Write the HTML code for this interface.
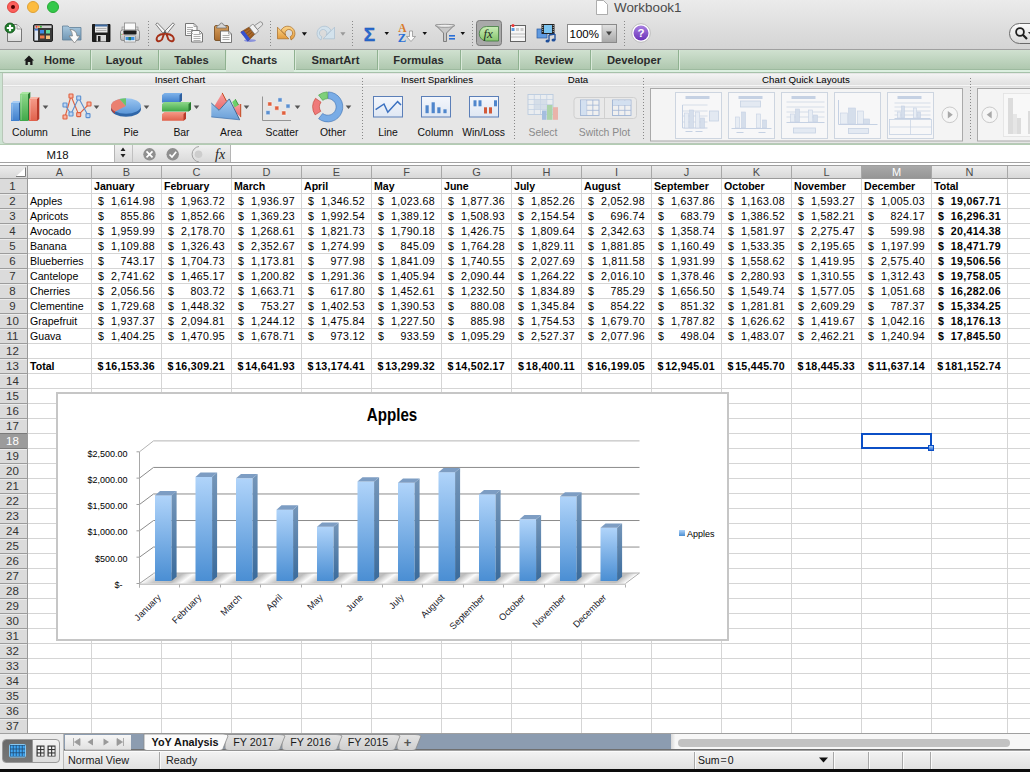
<!DOCTYPE html><html><head><meta charset="utf-8"><style>
*{margin:0;padding:0;box-sizing:border-box}
html,body{width:1030px;height:772px;overflow:hidden;background:#fff;font-family:"Liberation Sans",sans-serif}
.a{position:absolute}
.t{position:absolute;white-space:nowrap;line-height:1}
</style></head><body>
<div class="a" style="left:0;top:0;width:1030px;height:50px;background:linear-gradient(#ebebeb,#d4d4d4);border-bottom:1px solid #a0a0a0"></div>
<div class="a" style="left:7px;top:1px;width:12px;height:12px;border-radius:50%;background:#fc605c;border:0.5px solid #e0443e"></div>
<div class="a" style="left:27px;top:1px;width:12px;height:12px;border-radius:50%;background:#fdbc40;border:0.5px solid #dea236"></div>
<div class="a" style="left:47px;top:1px;width:12px;height:12px;border-radius:50%;background:#34c84a;border:0.5px solid #27aa35"></div>
<div class="a" style="left:11px;top:5px;width:4px;height:4px;border-radius:50%;background:#4d0000"></div>
<div class="t" style="left:614px;top:1px;font-size:13.4px;color:#4a4a4a">Workbook1</div>
<svg class="a" style="left:0;top:0" width="1030" height="49"><defs><linearGradient id="pg" x1="0" y1="0" x2="0" y2="1"><stop offset="0" stop-color="#ffffff"/><stop offset="1" stop-color="#dcdcdc"/></linearGradient><linearGradient id="fold" x1="0" y1="0" x2="0" y2="1"><stop offset="0" stop-color="#a9c8de"/><stop offset="1" stop-color="#6f96b4"/></linearGradient><linearGradient id="undo" x1="0" y1="0" x2="0" y2="1"><stop offset="0" stop-color="#fbd58a"/><stop offset="1" stop-color="#e39a3b"/></linearGradient><linearGradient id="fxg" x1="0" y1="0" x2="0" y2="1"><stop offset="0" stop-color="#c9ecb6"/><stop offset="1" stop-color="#86c46c"/></linearGradient><linearGradient id="help" x1="0" y1="0" x2="0" y2="1"><stop offset="0" stop-color="#a77ee0"/><stop offset="1" stop-color="#6a32b8"/></linearGradient><linearGradient id="clip" x1="0" y1="0" x2="0" y2="1"><stop offset="0" stop-color="#d9a05c"/><stop offset="1" stop-color="#a86a2c"/></linearGradient></defs><line x1="148.5" y1="21" x2="148.5" y2="46" stroke="#8a8a8a" stroke-width="1" stroke-dasharray="1,2"/><line x1="270.5" y1="21" x2="270.5" y2="46" stroke="#8a8a8a" stroke-width="1" stroke-dasharray="1,2"/><line x1="352.5" y1="21" x2="352.5" y2="46" stroke="#8a8a8a" stroke-width="1" stroke-dasharray="1,2"/><line x1="472.5" y1="21" x2="472.5" y2="46" stroke="#8a8a8a" stroke-width="1" stroke-dasharray="1,2"/><line x1="624.5" y1="21" x2="624.5" y2="46" stroke="#8a8a8a" stroke-width="1" stroke-dasharray="1,2"/><path d="M7.5,24.5 H17 L21.5,29 V41.5 H7.5 Z" fill="url(#pg)" stroke="#777" stroke-width="1"/><path d="M17,24.5 V29 H21.5" fill="#eee" stroke="#888" stroke-width="0.8"/><circle cx="10" cy="28" r="5" fill="#1e7a2a" stroke="#0d4d15" stroke-width="0.8"/><path d="M10,24.8 V31.2 M6.8,28 H13.2" stroke="#fff" stroke-width="2.2"/><rect x="33.5" y="24.5" width="19" height="17" rx="1.5" fill="#3a3a3a" stroke="#222" stroke-width="1"/><rect x="34.5" y="25.5" width="17" height="2.5" fill="#cfcfcf"/><circle cx="36.5" cy="26.8" r="1" fill="#e33"/><circle cx="38.7" cy="26.8" r="1" fill="#f93"/><circle cx="40.9" cy="26.8" r="1" fill="#3b3"/><rect x="34.5" y="28.5" width="3.5" height="12" fill="#dfe6f0"/><rect x="34.5" y="29" width="3.5" height="1.5" fill="#3a6fd0"/><rect x="40" y="30" width="4" height="3.5" fill="#3f8ae8"/><rect x="46" y="30" width="4" height="3.5" fill="#5fd9a0"/><rect x="40" y="35.5" width="4.5" height="3" fill="#f07a4a"/><rect x="46" y="35.5" width="4" height="3.5" fill="#f5c080"/><path d="M62.5,26 H68 L69.5,27.5 H81 V40 H62.5 Z" fill="url(#fold)" stroke="#5f7f98" stroke-width="0.8"/><path d="M70,29.5 Q76.5,29.5 77,36 H80 L74.5,43 L69,36 H72.5 Q72.5,32 70,29.5 Z" fill="#fafafa" stroke="#7a7a7a" stroke-width="0.7"/><path d="M92.5,24.5 H110 V41.5 H92.5 Z" fill="#1e1e1e" stroke="#000" stroke-width="0.8"/><rect x="95" y="24.5" width="12.5" height="8" fill="#e8e8e8"/><rect x="95" y="24.5" width="12.5" height="2" fill="#3e6aa0"/><line x1="96" y1="28.5" x2="106.5" y2="28.5" stroke="#999" stroke-width="0.7"/><line x1="96" y1="30.5" x2="106.5" y2="30.5" stroke="#999" stroke-width="0.7"/><rect x="96.5" y="35" width="9.5" height="6.5" fill="#d8d8d8"/><rect x="98" y="36" width="2.5" height="5.5" fill="#1e1e1e"/><linearGradient id="prb" x1="0" y1="0" x2="0" y2="1"><stop offset="0" stop-color="#f2f2f2"/><stop offset="1" stop-color="#b4b4b4"/></linearGradient><rect x="122" y="27" width="16" height="5" fill="#d8d8d8" stroke="#888" stroke-width="0.6"/><rect x="124.5" y="23" width="11" height="7.5" fill="#fbfbfb" stroke="#8a8a8a" stroke-width="0.8"/><rect x="120.5" y="30" width="19" height="10.5" rx="2" fill="url(#prb)" stroke="#7a7a7a" stroke-width="0.8"/><rect x="123.5" y="30.5" width="13" height="4" rx="0.8" fill="#1e1e1e"/><rect x="124.5" y="36" width="11" height="6" fill="#fbfbfb" stroke="#888" stroke-width="0.7"/><rect x="125.5" y="37" width="9" height="3.2" fill="#3c8fe0"/><rect x="128.5" y="37" width="2.5" height="3.2" fill="#2a7a52"/><circle cx="121.8" cy="34.3" r="0.6" fill="#5c5"/><circle cx="123" cy="34.3" r="0.6" fill="#e55"/><path d="M155.8,24.3 L157.3,22.8 L167,32.8 L164.2,34.8 Z" fill="#f6f6f6" stroke="#4a4a4a" stroke-width="0.7"/><path d="M174.5,24.3 L173,22.8 L163.3,32.8 L166.1,34.8 Z" fill="#f6f6f6" stroke="#4a4a4a" stroke-width="0.7"/><circle cx="165.2" cy="32.5" r="1.3" fill="#555"/><path d="M164,34 Q160,34 158,36 Q155.5,39 157.5,41 Q160,42 162,39.5 Z" fill="none" stroke="#a53018" stroke-width="1.9"/><path d="M166.4,34 Q170.4,34 172.4,36 Q174.9,39 172.9,41 Q170.4,42 168.4,39.5 Z" fill="none" stroke="#a53018" stroke-width="1.9"/><path d="M185.5,23.5 H194 L197,26.5 V35.5 H185.5 Z" fill="#fafafa" stroke="#6a6a6a" stroke-width="0.9"/><path d="M194,23.5 V26.5 H197" fill="none" stroke="#888" stroke-width="0.7"/><path d="M191.5,30.5 H199.5 L202.5,33.5 V42 H191.5 Z" fill="#fafafa" stroke="#6a6a6a" stroke-width="0.9"/><path d="M199.5,30.5 V33.5 H202.5" fill="none" stroke="#888" stroke-width="0.7"/><line x1="187" y1="27.5" x2="193" y2="27.5" stroke="#9a9a9a" stroke-width="0.8"/><line x1="187" y1="29.5" x2="193" y2="29.5" stroke="#9a9a9a" stroke-width="0.8"/><line x1="187" y1="31.5" x2="193" y2="31.5" stroke="#9a9a9a" stroke-width="0.8"/><line x1="187" y1="33.5" x2="193" y2="33.5" stroke="#9a9a9a" stroke-width="0.8"/><line x1="193.5" y1="34.5" x2="200.5" y2="34.5" stroke="#9a9a9a" stroke-width="0.8"/><line x1="193.5" y1="36.5" x2="200.5" y2="36.5" stroke="#9a9a9a" stroke-width="0.8"/><line x1="193.5" y1="38.5" x2="200.5" y2="38.5" stroke="#9a9a9a" stroke-width="0.8"/><line x1="193.5" y1="40.5" x2="200.5" y2="40.5" stroke="#9a9a9a" stroke-width="0.8"/><rect x="214.5" y="25.5" width="14" height="15" rx="1.5" fill="url(#clip)" stroke="#6e4418" stroke-width="0.8"/><path d="M216.5,28 Q216.5,25 219.5,25 Q220,23 221.5,23 Q223,23 223.5,25 Q226.5,25 226.5,28 Z" fill="#d6d6d6" stroke="#666" stroke-width="0.7"/><path d="M220.5,31 H228.5 L231.5,34 V42.5 H220.5 Z" fill="#fafafa" stroke="#6a6a6a" stroke-width="0.9"/><path d="M228.5,31 V34 H231.5" fill="none" stroke="#888" stroke-width="0.7"/><line x1="222.5" y1="35.5" x2="229.5" y2="35.5" stroke="#9a9a9a" stroke-width="0.8"/><line x1="222.5" y1="37.5" x2="229.5" y2="37.5" stroke="#9a9a9a" stroke-width="0.8"/><line x1="222.5" y1="39.5" x2="229.5" y2="39.5" stroke="#9a9a9a" stroke-width="0.8"/><ellipse cx="250" cy="40.6" rx="6" ry="1.4" fill="#4a5ae0" opacity="0.55"/><g transform="translate(244.5,36.5) rotate(-38)"><path d="M0,-5.8 L9.5,-4.6 L9.5,4.6 L0,5.8 Z" fill="#a8682a" stroke="#6a3a10" stroke-width="0.5"/><path d="M2,-4.5 L9,-3.5 M2,-1.5 L9,-1.2 M2,1.5 L9,1.2 M2,4.5 L9,3.5" stroke="#7a4210" stroke-width="0.6"/><path d="M-0.6,-5.8 L3,-5.4 L3,5.4 L-0.6,5.8 Z" fill="#3552d0"/><rect x="9.5" y="-4.6" width="5" height="9.2" rx="1" fill="#f2f2f2" stroke="#7a7a7a" stroke-width="0.7"/><path d="M14.5,-2.4 L21.5,-2 Q23.5,0 21.5,2 L14.5,2.4 Z" fill="#e6e6e6" stroke="#7a7a7a" stroke-width="0.7"/></g><path d="M281,30.5 A7.3,7.3 0 1 1 291,40 L290.3,36.6 A3.7,3.7 0 1 0 285.8,35.2 Z" fill="url(#undo)" stroke="#a86a22" stroke-width="0.7"/><path d="M277.5,27.2 V38.8 H288.8 Z" fill="url(#undo)" stroke="#a86a22" stroke-width="0.7"/><path d="M301.8,32.2 H307 L304.4,35.8 Z" fill="#111"/><g transform="translate(612,0) scale(-1,1)"><path d="M281,30.5 A7.3,7.3 0 1 1 291,40 L290.3,36.6 A3.7,3.7 0 1 0 285.8,35.2 Z" fill="#d3e2ec" stroke="#a9bfd0" stroke-width="0.7"/><path d="M277.5,27.2 V38.8 H288.8 Z" fill="#d3e2ec" stroke="#a9bfd0" stroke-width="0.7"/></g><path d="M340.3,32.2 H345.5 L342.9,35.8 Z" fill="#999"/><text x="369.5" y="40.5" text-anchor="middle" font-family="Liberation Sans" font-weight="bold" font-size="19" fill="#2a6ad0" stroke="#1d4fa8" stroke-width="0.3">&#931;</text><path d="M384.5,32 H389 L386.75,35 Z" fill="#111"/><text x="402.5" y="31.5" text-anchor="middle" font-family="Liberation Serif" font-weight="bold" font-size="11.5" fill="#d87a2a">A</text><text x="402" y="42" text-anchor="middle" font-family="Liberation Serif" font-weight="bold" font-size="12.5" fill="#2a6fd6">Z</text><path d="M409.5,31 V36.5 H406.5 L411,41.5 L415.5,36.5 H412.5 V31 Z" fill="#fafafa" stroke="#888" stroke-width="0.7"/><path d="M422.5,32 H427 L424.75,35 Z" fill="#111"/><path d="M435.5,25 H454.5 L446.5,33 V41.5 H443.5 V33 Z" fill="#c8c8c8" stroke="#6a6a6a" stroke-width="0.8"/><ellipse cx="445" cy="25.8" rx="9.5" ry="1.5" fill="#eee" stroke="#777" stroke-width="0.6"/><rect x="449" y="35" width="6" height="1.6" fill="#2a6fd6"/><rect x="449" y="38" width="6" height="1.6" fill="#2a6fd6"/><path d="M460.5,32 H465 L462.75,35 Z" fill="#111"/><rect x="476.5" y="20.5" width="25" height="25" rx="3" fill="#a9a9a9" stroke="#7a7a7a" stroke-width="1"/><path d="M486.5,26.5 H498.5 V41 H486.5 A7.25,7.25 0 0 1 486.5,26.5 Z" fill="url(#fxg)" stroke="#3e7a3e" stroke-width="0.8"/><text x="483.5" y="38.3" font-family="Liberation Serif" font-style="italic" font-size="13" fill="#1f2f1f">fx</text><rect x="510.5" y="25.5" width="15" height="16" fill="#f6f6f6" stroke="#555" stroke-width="0.9"/><rect x="511.5" y="28" width="3" height="3" fill="#5a9ae0"/><rect x="516" y="28" width="3" height="3" fill="#ccc"/><rect x="520.5" y="28" width="3" height="3" fill="#ccc"/><circle cx="513" cy="25.5" r="1.5" fill="#e33"/><line x1="511" y1="34" x2="525" y2="34" stroke="#999" stroke-width="0.6"/><line x1="511" y1="37" x2="525" y2="37" stroke="#999" stroke-width="0.6"/><rect x="537" y="29" width="10" height="9" fill="#5f9ae0" stroke="#2a5aa0" stroke-width="0.7"/><rect x="541.5" y="24" width="13" height="10" fill="#222"/><rect x="544" y="25" width="8" height="8" fill="#7cc4f0"/><path d="M542.7,25 V33 M553.3,25 V33" stroke="#ddd" stroke-width="0.8" stroke-dasharray="1,1"/><path d="M549,35 V41 M555,34 V40" stroke="#1e4e9a" stroke-width="1.3"/><path d="M549,35 L555,34" stroke="#1e4e9a" stroke-width="1.6"/><ellipse cx="547.5" cy="41" rx="2" ry="1.5" fill="#1e4e9a"/><ellipse cx="553.5" cy="40" rx="2" ry="1.5" fill="#1e4e9a"/><rect x="567.5" y="24.5" width="49" height="18" fill="#fff" stroke="#8a8a8a" stroke-width="1"/><linearGradient id="zd" x1="0" y1="0" x2="0" y2="1"><stop offset="0" stop-color="#e0e0e0"/><stop offset="1" stop-color="#a9a9a9"/></linearGradient><rect x="602" y="25" width="14" height="17" fill="url(#zd)"/><line x1="602" y1="25" x2="602" y2="42" stroke="#aaa" stroke-width="0.8"/><path d="M606,31.5 H612 L609,35.5 Z" fill="#444"/><text x="569.5" y="38" font-family="Liberation Sans" font-size="11.5" fill="#000">100%</text><circle cx="641" cy="33" r="9.3" fill="#fff" stroke="#b0b0b0" stroke-width="0.8"/><circle cx="641" cy="33" r="7.5" fill="url(#help)"/><text x="641" y="37.3" text-anchor="middle" font-family="Liberation Sans" font-weight="bold" font-size="11.5" fill="#fff">?</text><path d="M596.5,0.5 H603.5 L607.5,4.5 V14.5 H596.5 Z" fill="#fff" stroke="#9a9a9a" stroke-width="0.8"/><linearGradient id="sf" x1="0" y1="0" x2="0" y2="1"><stop offset="0" stop-color="#fdfdfd"/><stop offset="1" stop-color="#d8d8d8"/></linearGradient><rect x="1009.5" y="23.5" width="40" height="20" rx="10" fill="url(#sf)" stroke="#6a6a6a" stroke-width="1"/><circle cx="1020" cy="32" r="3.9" fill="none" stroke="#1e1e1e" stroke-width="1.8"/><path d="M1022.8,34.8 L1027,39" stroke="#1e1e1e" stroke-width="2.2"/><path d="M1028,32 H1031 L1029.5,34 Z" fill="#333"/></svg>
<div class="a" style="left:0;top:50px;width:1030px;height:20px;background:linear-gradient(#d0e1d0,#afc8af);border-bottom:1px solid #9dba9f"></div>
<div class="a" style="left:0;top:70px;width:1030px;height:75px;background:#cde3d2"></div>
<div class="a" style="left:0;top:70px;width:1030px;height:2px;background:#dcefe0"></div>
<div class="a" style="left:0;top:72px;width:1030px;height:1px;background:#a6c2aa"></div>
<div class="a" style="left:2px;top:73px;width:1028px;height:71px;background:#e6e6e6;border:1px solid #b8c8b8;border-top:none;border-right:none;border-radius:0 0 0 4px"></div>
<div class="a" style="left:3px;top:74px;width:1027px;height:13px;background:linear-gradient(#f2f2f2,#dedede)"></div>
<div class="a" style="left:226px;top:50px;width:68px;height:22px;background:linear-gradient(#e4eee4,#d2e2d4)"></div><div class="a" style="left:90px;top:50px;width:1px;height:20px;background:#8fb190"></div><div class="a" style="left:91px;top:50px;width:1px;height:20px;background:#dbe9db"></div><div class="a" style="left:158px;top:50px;width:1px;height:20px;background:#8fb190"></div><div class="a" style="left:159px;top:50px;width:1px;height:20px;background:#dbe9db"></div><div class="a" style="left:225px;top:50px;width:1px;height:20px;background:#8fb190"></div><div class="a" style="left:226px;top:50px;width:1px;height:20px;background:#dbe9db"></div><div class="a" style="left:294px;top:50px;width:1px;height:20px;background:#8fb190"></div><div class="a" style="left:295px;top:50px;width:1px;height:20px;background:#dbe9db"></div><div class="a" style="left:377px;top:50px;width:1px;height:20px;background:#8fb190"></div><div class="a" style="left:378px;top:50px;width:1px;height:20px;background:#dbe9db"></div><div class="a" style="left:460px;top:50px;width:1px;height:20px;background:#8fb190"></div><div class="a" style="left:461px;top:50px;width:1px;height:20px;background:#dbe9db"></div><div class="a" style="left:518px;top:50px;width:1px;height:20px;background:#8fb190"></div><div class="a" style="left:519px;top:50px;width:1px;height:20px;background:#dbe9db"></div><div class="a" style="left:590px;top:50px;width:1px;height:20px;background:#8fb190"></div><div class="a" style="left:591px;top:50px;width:1px;height:20px;background:#dbe9db"></div><div class="a" style="left:678px;top:50px;width:1px;height:20px;background:#8fb190"></div><div class="a" style="left:679px;top:50px;width:1px;height:20px;background:#dbe9db"></div><div class="t" style="left:44px;top:55px;font-size:11.2px;font-weight:bold;color:#2b2b2b">Home</div><div class="t" style="left:90px;width:68px;text-align:center;top:55px;font-size:11.2px;font-weight:bold;color:#2b2b2b">Layout</div><div class="t" style="left:158px;width:67px;text-align:center;top:55px;font-size:11.2px;font-weight:bold;color:#2b2b2b">Tables</div><div class="t" style="left:225px;width:69px;text-align:center;top:55px;font-size:11.2px;font-weight:bold;color:#2b2b2b">Charts</div><div class="t" style="left:294px;width:83px;text-align:center;top:55px;font-size:11.2px;font-weight:bold;color:#2b2b2b">SmartArt</div><div class="t" style="left:377px;width:83px;text-align:center;top:55px;font-size:11.2px;font-weight:bold;color:#2b2b2b">Formulas</div><div class="t" style="left:460px;width:58px;text-align:center;top:55px;font-size:11.2px;font-weight:bold;color:#2b2b2b">Data</div><div class="t" style="left:518px;width:72px;text-align:center;top:55px;font-size:11.2px;font-weight:bold;color:#2b2b2b">Review</div><div class="t" style="left:590px;width:88px;text-align:center;top:55px;font-size:11.2px;font-weight:bold;color:#2b2b2b">Developer</div><svg class="a" style="left:22px;top:54px" width="14" height="12"><path d="M2,6.5 L7,1.5 L12,6.5 H10.5 V11 H8.2 V8 H5.8 V11 H3.5 V6.5 Z" fill="#1a1a1a"/></svg>
<svg class="a" style="left:0;top:0" width="1030" height="146"><defs><linearGradient id="rb" x1="0" y1="0" x2="0" y2="1"><stop offset="0" stop-color="#7fb3ea"/><stop offset="1" stop-color="#3f7fcc"/></linearGradient><linearGradient id="rg" x1="0" y1="0" x2="0" y2="1"><stop offset="0" stop-color="#8fd88a"/><stop offset="1" stop-color="#3fa848"/></linearGradient><linearGradient id="rr" x1="0" y1="0" x2="0" y2="1"><stop offset="0" stop-color="#f59a88"/><stop offset="1" stop-color="#e0604a"/></linearGradient><linearGradient id="pieb" x1="0" y1="0" x2="0" y2="1"><stop offset="0" stop-color="#9cc6f0"/><stop offset="1" stop-color="#5a96d8"/></linearGradient><linearGradient id="sp" x1="0" y1="0" x2="0" y2="1"><stop offset="0" stop-color="#f4f7fc"/><stop offset="1" stop-color="#dfe7f3"/></linearGradient></defs><rect x="3" y="74" width="1027" height="11" fill="url(#hb)"/><linearGradient id="hb" x1="0" y1="0" x2="0" y2="1"><stop offset="0" stop-color="#f3f3f3"/><stop offset="1" stop-color="#e0e0e0"/></linearGradient><line x1="3" y1="85.5" x2="1030" y2="85.5" stroke="#f6f6f6" stroke-width="1"/><text x="180" y="83" text-anchor="middle" font-family="Liberation Sans" font-size="9.7" fill="#000">Insert Chart</text><text x="437" y="83" text-anchor="middle" font-family="Liberation Sans" font-size="9.7" fill="#000">Insert Sparklines</text><text x="578" y="83" text-anchor="middle" font-family="Liberation Sans" font-size="9.7" fill="#000">Data</text><text x="806" y="83" text-anchor="middle" font-family="Liberation Sans" font-size="9.7" fill="#000">Chart Quick Layouts</text><line x1="362.5" y1="78" x2="362.5" y2="140" stroke="#888" stroke-width="1" stroke-dasharray="1,2"/><line x1="514.5" y1="78" x2="514.5" y2="140" stroke="#888" stroke-width="1" stroke-dasharray="1,2"/><line x1="643.5" y1="78" x2="643.5" y2="140" stroke="#888" stroke-width="1" stroke-dasharray="1,2"/><line x1="970.5" y1="78" x2="970.5" y2="140" stroke="#888" stroke-width="1" stroke-dasharray="1,2"/><text x="30" y="136" text-anchor="middle" font-family="Liberation Sans" font-size="10.4" fill="#111">Column</text><text x="81" y="136" text-anchor="middle" font-family="Liberation Sans" font-size="10.4" fill="#111">Line</text><text x="131" y="136" text-anchor="middle" font-family="Liberation Sans" font-size="10.4" fill="#111">Pie</text><text x="181.5" y="136" text-anchor="middle" font-family="Liberation Sans" font-size="10.4" fill="#111">Bar</text><text x="231" y="136" text-anchor="middle" font-family="Liberation Sans" font-size="10.4" fill="#111">Area</text><text x="282" y="136" text-anchor="middle" font-family="Liberation Sans" font-size="10.4" fill="#111">Scatter</text><text x="333" y="136" text-anchor="middle" font-family="Liberation Sans" font-size="10.4" fill="#111">Other</text><text x="388" y="136" text-anchor="middle" font-family="Liberation Sans" font-size="10.4" fill="#111">Line</text><text x="435.5" y="136" text-anchor="middle" font-family="Liberation Sans" font-size="10.4" fill="#111">Column</text><text x="483.5" y="136" text-anchor="middle" font-family="Liberation Sans" font-size="10.4" fill="#111">Win/Loss</text><text x="543" y="136" text-anchor="middle" font-family="Liberation Sans" font-size="10.4" fill="#8a8a8a">Select</text><text x="604.5" y="136" text-anchor="middle" font-family="Liberation Sans" font-size="10.4" fill="#8a8a8a">Switch Plot</text><path d="M42.7,105.5 H48.3 L45.5,109 Z" fill="#555"/><path d="M93.7,105.5 H99.3 L96.5,109 Z" fill="#555"/><path d="M143.7,105.5 H149.3 L146.5,109 Z" fill="#555"/><path d="M193.7,105.5 H199.3 L196.5,109 Z" fill="#555"/><path d="M243.7,105.5 H249.3 L246.5,109 Z" fill="#555"/><path d="M294.7,105.5 H300.3 L297.5,109 Z" fill="#555"/><path d="M345.7,105.5 H351.3 L348.5,109 Z" fill="#555"/><path d="M11,103 L13.3,101 H21.3 L19,103 Z" fill="#a9cdf3"/><rect x="11" y="103" width="8" height="18" fill="url(#rb)"/><path d="M19,103 L21.3,101 V119 L19,121 Z" fill="#2f5f9f"/><line x1="12.2" y1="104" x2="12.2" y2="120" stroke="#fff" stroke-opacity="0.35" stroke-width="0.8"/><path d="M20,94 L22.3,92 H30.3 L28,94 Z" fill="#a8e6a0"/><rect x="20" y="94" width="8" height="27" fill="url(#rg)"/><path d="M28,94 L30.3,92 V119 L28,121 Z" fill="#2a7a32"/><line x1="21.2" y1="95" x2="21.2" y2="120" stroke="#fff" stroke-opacity="0.35" stroke-width="0.8"/><path d="M29,99 L31.3,97 H39.3 L37,99 Z" fill="#f8b8a8"/><rect x="29" y="99" width="8" height="22" fill="url(#rr)"/><path d="M37,99 L39.3,97 V119 L37,121 Z" fill="#b83a2a"/><line x1="30.2" y1="100" x2="30.2" y2="120" stroke="#fff" stroke-opacity="0.35" stroke-width="0.8"/><polyline points="65,117 71,96 78.7,114.6 89,104" fill="none" stroke="#e0603e" stroke-width="1.1"/><polyline points="65,105 71,114 78.7,98 88,115.6" fill="none" stroke="#5a8fd0" stroke-width="1.1"/><rect x="63" y="115" width="4" height="4" rx="0.6" fill="#f7b4a4" stroke="#e0603e" stroke-width="1.1"/><rect x="69" y="94" width="4" height="4" rx="0.6" fill="#f7b4a4" stroke="#e0603e" stroke-width="1.1"/><rect x="76.7" y="112.6" width="4" height="4" rx="0.6" fill="#f7b4a4" stroke="#e0603e" stroke-width="1.1"/><rect x="87" y="102" width="4" height="4" rx="0.6" fill="#f7b4a4" stroke="#e0603e" stroke-width="1.1"/><rect x="63" y="103" width="4" height="4" rx="0.6" fill="#bcd6f4" stroke="#5a8fd0" stroke-width="1.1"/><rect x="69" y="112" width="4" height="4" rx="0.6" fill="#bcd6f4" stroke="#5a8fd0" stroke-width="1.1"/><rect x="76.7" y="96" width="4" height="4" rx="0.6" fill="#bcd6f4" stroke="#5a8fd0" stroke-width="1.1"/><rect x="86" y="113.6" width="4" height="4" rx="0.6" fill="#bcd6f4" stroke="#5a8fd0" stroke-width="1.1"/><ellipse cx="126" cy="109" rx="15" ry="7.8" fill="#2f66a8"/><path d="M111,106 V108.5 A15,7.8 0 0 0 115,113.5 L115,111 Z" fill="#b8453a"/><ellipse cx="126" cy="106" rx="15" ry="7.8" fill="url(#pieb)"/><path d="M126,106 L115.2,111.5 A15,7.8 0 0 1 119.5,99 Z" fill="#ea8070"/><path d="M126,106 L119.5,99 A15,7.8 0 0 1 126,98.2 Z" fill="#6cc46a"/><path d="M162,95 L164.5,93 H182 V100.5 L179.5,102.5 H162 Z" fill="url(#rb)"/><path d="M179.5,95 L182,93 V100.5 L179.5,102.5 Z" fill="#2f5f9f"/><path d="M162,104 L164.5,102 H191 V109.5 L188.5,111.5 H162 Z" fill="url(#rg)"/><path d="M188.5,104 L191,102 V109.5 L188.5,111.5 Z" fill="#2a7a32"/><path d="M162,114 L164.5,112 H186 V118.8 L183.5,120.8 H162 Z" fill="url(#rr)"/><path d="M183.5,114 L186,112 V118.8 L183.5,120.8 Z" fill="#b83a2a"/><linearGradient id="arb" x1="0" y1="0" x2="0" y2="1"><stop offset="0" stop-color="#a8cdf0"/><stop offset="1" stop-color="#6a9fd8"/></linearGradient><linearGradient id="arr" x1="0" y1="0" x2="0" y2="1"><stop offset="0" stop-color="#f8a0a0"/><stop offset="1" stop-color="#ea6a6a"/></linearGradient><path d="M214.7,105.5 L222.2,92.9 L227,101.5 L219,110 Z" fill="url(#arr)"/><path d="M222.2,92.9 L226.4,101" fill="none" stroke="#c04010" stroke-width="0.9"/><path d="M233,105 L240.7,104 V117.1 L236,113 Z" fill="url(#arr)"/><path d="M240.7,104 V117.1" stroke="#c04010" stroke-width="0.9"/><path d="M232.2,102 L235.3,99.2 L238.5,105 L234.6,107.4 Z" fill="#6cd06a"/><path d="M235.3,99.2 L238.5,105" stroke="#2a8a2a" stroke-width="0.8"/><path d="M211.3,103 L219.1,110.3 L229.3,98.9 L239.7,119.8 L211.3,116.9 Z" fill="url(#arb)"/><path d="M211.3,103 L219.1,110.3 L229.3,98.9 L239.7,119.8" fill="none" stroke="#3a5f88" stroke-width="0.9"/><path d="M211.3,116.9 L239.7,119.8" fill="none" stroke="#4a78b0" stroke-width="0.8"/><path d="M262.5,96.5 V120.5 H291" fill="none" stroke="#8a8a8a" stroke-width="0.9"/><rect x="267.7" y="101.9" width="4.2" height="4.2" rx="0.6" fill="#e0603e" stroke="#fafafa" stroke-width="0.6"/><rect x="274.7" y="106.0" width="4.2" height="4.2" rx="0.6" fill="#e0603e" stroke="#fafafa" stroke-width="0.6"/><rect x="281.7" y="110.9" width="4.2" height="4.2" rx="0.6" fill="#e0603e" stroke="#fafafa" stroke-width="0.6"/><rect x="277.9" y="97.80000000000001" width="4.2" height="4.2" rx="0.6" fill="#5a8fd0" stroke="#fafafa" stroke-width="0.6"/><rect x="285.9" y="104.0" width="4.2" height="4.2" rx="0.6" fill="#5a8fd0" stroke="#fafafa" stroke-width="0.6"/><rect x="265.9" y="110.60000000000001" width="4.2" height="4.2" rx="0.6" fill="#5a8fd0" stroke="#fafafa" stroke-width="0.6"/><path d="M328.32,91.91 A15,15 0 1 1 318.57,118.72 L322.69,113.44 A8.3,8.3 0 1 0 328.09,98.61 Z" fill="#79ace6" stroke="#3a6fb0" stroke-width="0.6"/><path d="M315.08,114.85 A15,15 0 0 1 315.51,98.30 L321.00,102.14 A8.3,8.3 0 0 0 320.76,111.30 Z" fill="#ef7a7a" stroke="#c0392b" stroke-width="0.6"/><path d="M318.57,95.08 A15,15 0 0 1 327.28,91.91 L327.51,98.61 A8.3,8.3 0 0 0 322.69,100.36 Z" fill="#7ed07a" stroke="#3a9a3a" stroke-width="0.6"/><rect x="373.5" y="96.5" width="29" height="20.5" fill="url(#sp)" stroke="#5b7fb8" stroke-width="1"/><rect x="421.5" y="96.5" width="29" height="20.5" fill="url(#sp)" stroke="#5b7fb8" stroke-width="1"/><rect x="469.5" y="96.5" width="29" height="20.5" fill="url(#sp)" stroke="#5b7fb8" stroke-width="1"/><polyline points="375.6,109.7 384,104 387.8,112.2 397.6,101.6 401,105" fill="none" stroke="#3a70c0" stroke-width="1.5"/><rect x="425.5" y="105.3" width="3.2" height="7.900000000000006" fill="#4f86cc"/><rect x="431.6" y="102.3" width="3.2" height="10.900000000000006" fill="#4f86cc"/><rect x="437.3" y="107.3" width="3.2" height="5.900000000000006" fill="#4f86cc"/><rect x="443.4" y="109.3" width="3.2" height="3.9000000000000057" fill="#4f86cc"/><rect x="473.5" y="100.3" width="3" height="6" fill="#4f86cc"/><rect x="478.5" y="100.3" width="3" height="6" fill="#4f86cc"/><rect x="494" y="100.3" width="3" height="6" fill="#4f86cc"/><rect x="484" y="107.3" width="3" height="6.2" fill="#d25a3a"/><rect x="489" y="107.3" width="3" height="6.2" fill="#d25a3a"/><g opacity="0.55"><rect x="528" y="94.5" width="25" height="20" fill="#eef3f9" stroke="#8fb0d8" stroke-width="0.8"/><line x1="534.25" y1="94.5" x2="534.25" y2="114.5" stroke="#9fbbe0" stroke-width="0.7"/><line x1="528" y1="99.5" x2="553" y2="99.5" stroke="#9fbbe0" stroke-width="0.7"/><line x1="540.5" y1="94.5" x2="540.5" y2="114.5" stroke="#9fbbe0" stroke-width="0.7"/><line x1="528" y1="104.5" x2="553" y2="104.5" stroke="#9fbbe0" stroke-width="0.7"/><line x1="546.75" y1="94.5" x2="546.75" y2="114.5" stroke="#9fbbe0" stroke-width="0.7"/><line x1="528" y1="109.5" x2="553" y2="109.5" stroke="#9fbbe0" stroke-width="0.7"/><rect x="534.5" y="99.5" width="12" height="10" fill="#b8cce6" opacity="0.7"/><rect x="542" y="110.5" width="4.5" height="9.3" fill="#6f9fd8"/><rect x="547" y="105" width="5.5" height="14.8" fill="#7cc47a"/><rect x="553" y="107.2" width="5" height="12.6" fill="#ee8a7a"/></g><rect x="574" y="97.5" width="62.5" height="21" rx="3" fill="#e9e9e9" stroke="#cfcfcf" stroke-width="1"/><line x1="604.5" y1="98" x2="604.5" y2="118" stroke="#d0d0d0" stroke-width="1"/><rect x="580.5" y="100" width="18.5" height="15.5" fill="#f0f0f0" stroke="#9fb4d4" stroke-width="0.9"/><line x1="586.6666666666666" y1="100" x2="586.6666666666666" y2="115.5" stroke="#9fb4d4" stroke-width="0.8"/><line x1="580.5" y1="105.16666666666667" x2="599.0" y2="105.16666666666667" stroke="#9fb4d4" stroke-width="0.8"/><line x1="592.8333333333334" y1="100" x2="592.8333333333334" y2="115.5" stroke="#9fb4d4" stroke-width="0.8"/><line x1="580.5" y1="110.33333333333333" x2="599.0" y2="110.33333333333333" stroke="#9fb4d4" stroke-width="0.8"/><rect x="581.0" y="100.5" width="5.5" height="14.5" fill="#d3e0f0"/><rect x="612.5" y="100" width="18.5" height="15.5" fill="#f0f0f0" stroke="#9fb4d4" stroke-width="0.9"/><line x1="618.6666666666666" y1="100" x2="618.6666666666666" y2="115.5" stroke="#9fb4d4" stroke-width="0.8"/><line x1="612.5" y1="105.16666666666667" x2="631.0" y2="105.16666666666667" stroke="#9fb4d4" stroke-width="0.8"/><line x1="624.8333333333334" y1="100" x2="624.8333333333334" y2="115.5" stroke="#9fb4d4" stroke-width="0.8"/><line x1="612.5" y1="110.33333333333333" x2="631.0" y2="110.33333333333333" stroke="#9fb4d4" stroke-width="0.8"/><rect x="613.0" y="100.5" width="17.5" height="4.6" fill="#d3e0f0"/><rect x="650.5" y="88.5" width="312" height="52.5" fill="#f4f4f4" stroke="#a9a9a9" stroke-width="1"/><rect x="977.5" y="88.5" width="60" height="52.5" fill="#f4f4f4" stroke="#a9a9a9" stroke-width="1"/><circle cx="949.8" cy="114.8" r="7.8" fill="#f6f6f6" stroke="#c4c4c4" stroke-width="0.9"/><path d="M947.8,111 L952.8,114.8 L947.8,118.6 Z" fill="#a8a8a8"/><circle cx="989.7" cy="114.8" r="7.8" fill="#f6f6f6" stroke="#c4c4c4" stroke-width="0.9"/><path d="M991.7,111 L986.7,114.8 L991.7,118.6 Z" fill="#a8a8a8"/><rect x="1003.5" y="93.5" width="30" height="43" fill="#f8f8f8" stroke="#e2e2e2" stroke-width="0.8"/><rect x="1008" y="98" width="5" height="36" fill="#dcdcdc"/><rect x="1013" y="114" width="4" height="20" fill="#e6e6e6"/><rect x="1017" y="118" width="4" height="16" fill="#dcdcdc"/><rect x="1028" y="111" width="4" height="23" fill="#dcdcdc"/><rect x="675.5" y="92.5" width="46" height="46" fill="#f7f7f8" stroke="#cdd5e0" stroke-width="1"/><rect x="685.5" y="96" width="24" height="3" fill="#c5d1e3"/><path d="M682.5,105 V128 H707.5" fill="none" stroke="#c5d1e3" stroke-width="1"/><line x1="682.5" y1="105" x2="707.5" y2="105" stroke="#c5d1e3" stroke-width="0.7"/><line x1="682.5" y1="111" x2="707.5" y2="111" stroke="#c5d1e3" stroke-width="0.7"/><line x1="682.5" y1="116" x2="707.5" y2="116" stroke="#c5d1e3" stroke-width="0.7"/><line x1="682.5" y1="122" x2="707.5" y2="122" stroke="#c5d1e3" stroke-width="0.7"/><rect x="684.5" y="113" width="4" height="15" fill="#e8edf4" stroke="#c5d1e3" stroke-width="0.6"/><rect x="689.5" y="110" width="4" height="18" fill="#d5deeb" stroke="#c5d1e3" stroke-width="0.6"/><rect x="695.5" y="112" width="4" height="16" fill="#e8edf4" stroke="#c5d1e3" stroke-width="0.6"/><rect x="700.5" y="118" width="4" height="10" fill="#d5deeb" stroke="#c5d1e3" stroke-width="0.6"/><rect x="709.5" y="111" width="9" height="10" fill="#e3e9f2" stroke="#c5d1e3" stroke-width="0.8"/><line x1="685.5" y1="131.5" x2="692.5" y2="131.5" stroke="#c5d1e3"/><line x1="695.5" y1="131.5" x2="702.5" y2="131.5" stroke="#c5d1e3"/><rect x="728.5" y="92.5" width="46" height="46" fill="#f7f7f8" stroke="#cdd5e0" stroke-width="1"/><rect x="738.5" y="96" width="24" height="3" fill="#c5d1e3"/><rect x="740.5" y="101" width="20" height="6" fill="#e3e9f2" stroke="#c5d1e3" stroke-width="0.8"/><line x1="731.5" y1="128.5" x2="771.5" y2="128.5" stroke="#c5d1e3"/><rect x="735.5" y="117" width="4" height="11" fill="#e8edf4" stroke="#c5d1e3" stroke-width="0.6"/><rect x="741.5" y="112" width="4" height="16" fill="#d5deeb" stroke="#c5d1e3" stroke-width="0.6"/><rect x="756.5" y="114" width="4" height="14" fill="#e8edf4" stroke="#c5d1e3" stroke-width="0.6"/><rect x="762.5" y="120" width="4" height="8" fill="#d5deeb" stroke="#c5d1e3" stroke-width="0.6"/><line x1="736.5" y1="132.5" x2="743.5" y2="132.5" stroke="#c5d1e3"/><line x1="758.5" y1="132.5" x2="765.5" y2="132.5" stroke="#c5d1e3"/><rect x="781.5" y="92.5" width="46" height="46" fill="#f7f7f8" stroke="#cdd5e0" stroke-width="1"/><rect x="791.5" y="96" width="24" height="3" fill="#c5d1e3"/><line x1="786.5" y1="102" x2="824.5" y2="102" stroke="#c5d1e3" stroke-width="0.7"/><line x1="786.5" y1="107" x2="824.5" y2="107" stroke="#c5d1e3" stroke-width="0.7"/><line x1="786.5" y1="112" x2="824.5" y2="112" stroke="#c5d1e3" stroke-width="0.7"/><line x1="786.5" y1="117" x2="824.5" y2="117" stroke="#c5d1e3" stroke-width="0.7"/><line x1="786.5" y1="122.5" x2="824.5" y2="122.5" stroke="#c5d1e3"/><rect x="790.5" y="114" width="4" height="8" fill="#e8edf4" stroke="#c5d1e3" stroke-width="0.6"/><rect x="795.5" y="109" width="4" height="13" fill="#d5deeb" stroke="#c5d1e3" stroke-width="0.6"/><rect x="808.5" y="110" width="4" height="12" fill="#e8edf4" stroke="#c5d1e3" stroke-width="0.6"/><rect x="813.5" y="115" width="4" height="7" fill="#d5deeb" stroke="#c5d1e3" stroke-width="0.6"/><rect x="793.5" y="128" width="22" height="5" fill="#e3e9f2" stroke="#c5d1e3" stroke-width="0.8"/><rect x="834.5" y="92.5" width="46" height="46" fill="#f7f7f8" stroke="#cdd5e0" stroke-width="1"/><path d="M838.5,100 V124.5 H877.5" fill="none" stroke="#c5d1e3" stroke-width="1"/><rect x="840.5" y="113" width="7" height="11" fill="#e8edf4" stroke="#c5d1e3" stroke-width="0.6"/><rect x="848.5" y="108" width="7" height="16" fill="#d5deeb" stroke="#c5d1e3" stroke-width="0.6"/><rect x="857.5" y="111" width="6" height="13" fill="#e8edf4" stroke="#c5d1e3" stroke-width="0.6"/><rect x="863.5" y="119" width="6" height="5" fill="#d5deeb" stroke="#c5d1e3" stroke-width="0.6"/><rect x="848.5" y="128.5" width="20" height="5" fill="#e3e9f2" stroke="#c5d1e3" stroke-width="0.8"/><rect x="887.5" y="92.5" width="46" height="46" fill="#f7f7f8" stroke="#cdd5e0" stroke-width="1"/><rect x="897.5" y="96" width="24" height="3" fill="#c5d1e3"/><line x1="894.5" y1="103" x2="930.5" y2="103" stroke="#c5d1e3" stroke-width="0.7"/><line x1="894.5" y1="107" x2="930.5" y2="107" stroke="#c5d1e3" stroke-width="0.7"/><line x1="894.5" y1="111" x2="930.5" y2="111" stroke="#c5d1e3" stroke-width="0.7"/><line x1="894.5" y1="115" x2="930.5" y2="115" stroke="#c5d1e3" stroke-width="0.7"/><line x1="894.5" y1="118.5" x2="930.5" y2="118.5" stroke="#c5d1e3"/><rect x="897.5" y="112" width="3" height="6" fill="#e8edf4" stroke="#c5d1e3" stroke-width="0.6"/><rect x="901.5" y="106" width="3" height="12" fill="#d5deeb" stroke="#c5d1e3" stroke-width="0.6"/><rect x="913.5" y="108" width="3" height="10" fill="#e8edf4" stroke="#c5d1e3" stroke-width="0.6"/><rect x="917.5" y="112" width="3" height="6" fill="#d5deeb" stroke="#c5d1e3" stroke-width="0.6"/><rect x="889.5" y="119.5" width="42" height="15" fill="none" stroke="#c5d1e3" stroke-width="0.8"/><line x1="889.5" y1="127" x2="931.5" y2="127" stroke="#c5d1e3" stroke-width="0.7"/><line x1="910.5" y1="119.5" x2="910.5" y2="134.5" stroke="#c5d1e3" stroke-width="0.7"/></svg>
<div class="a" style="left:0;top:144px;width:1030px;height:1px;background:#b3ccb3"></div>
<div class="a" style="left:0;top:145px;width:1030px;height:18px;background:#fff;border-bottom:1px solid #a3a3a3"></div>
<div class="t" style="left:0;top:149.5px;width:115px;text-align:center;font-size:11.4px;color:#111">M18</div>
<div class="a" style="left:114px;top:145px;width:117px;height:17px;background:linear-gradient(#f0f0f0,#dadada);border-left:1px solid #b5b5b5;border-right:1px solid #b5b5b5"></div>
<div class="a" style="left:132px;top:145px;width:1px;height:17px;background:#c0c0c0"></div>
<svg class="a" style="left:110px;top:144px" width="130" height="20"><path d="M10.5,7 L13,3.5 L15.5,7 Z M10.5,10 L13,13.5 L15.5,10 Z" fill="#222"/><circle cx="39.5" cy="10.3" r="6.2" fill="#8f8f8f"/><path d="M36.5,7.3 L42.5,13.3 M42.5,7.3 L36.5,13.3" stroke="#fff" stroke-width="1.7"/><circle cx="62.7" cy="10.3" r="6.2" fill="#8f8f8f"/><path d="M59.5,10.5 L62,13 L66.2,7.8" fill="none" stroke="#fff" stroke-width="1.7"/><path d="M89,2.5 A7.8,7.8 0 0 0 89,18" fill="none" stroke="#9a9a9a" stroke-width="0.9"/><circle cx="88.5" cy="10.2" r="3.8" fill="#cdcdcd"/><text x="105" y="14.5" font-family="Liberation Serif" font-style="italic" font-size="14" fill="#222">fx</text></svg>
<div class="a" style="left:0;top:163px;width:1030px;height:3px;background:#fff;border-bottom:1px solid #9e9e9e"></div>
<div class="a" style="left:0;top:166px;width:1030px;height:13px;background:linear-gradient(#ececec,#d8d8d8);border-bottom:1px solid #9a9a9a"></div>
<div class="a" style="left:0;top:179px;width:28px;height:555px;background:#dbdbdb;border-right:1px solid #9a9a9a"></div>
<div class="a" style="left:28px;top:193px;width:1002px;height:1px;background:#d5d5d5"></div>
<div class="a" style="left:0;top:193px;width:27px;height:1px;background:#9c9c9c"></div>
<div class="a" style="left:0;top:194px;width:27px;height:1px;background:#ececec"></div>
<div class="a" style="left:28px;top:208px;width:1002px;height:1px;background:#d5d5d5"></div>
<div class="a" style="left:0;top:208px;width:27px;height:1px;background:#9c9c9c"></div>
<div class="a" style="left:0;top:209px;width:27px;height:1px;background:#ececec"></div>
<div class="a" style="left:28px;top:223px;width:1002px;height:1px;background:#d5d5d5"></div>
<div class="a" style="left:0;top:223px;width:27px;height:1px;background:#9c9c9c"></div>
<div class="a" style="left:0;top:224px;width:27px;height:1px;background:#ececec"></div>
<div class="a" style="left:28px;top:238px;width:1002px;height:1px;background:#d5d5d5"></div>
<div class="a" style="left:0;top:238px;width:27px;height:1px;background:#9c9c9c"></div>
<div class="a" style="left:0;top:239px;width:27px;height:1px;background:#ececec"></div>
<div class="a" style="left:28px;top:253px;width:1002px;height:1px;background:#d5d5d5"></div>
<div class="a" style="left:0;top:253px;width:27px;height:1px;background:#9c9c9c"></div>
<div class="a" style="left:0;top:254px;width:27px;height:1px;background:#ececec"></div>
<div class="a" style="left:28px;top:268px;width:1002px;height:1px;background:#d5d5d5"></div>
<div class="a" style="left:0;top:268px;width:27px;height:1px;background:#9c9c9c"></div>
<div class="a" style="left:0;top:269px;width:27px;height:1px;background:#ececec"></div>
<div class="a" style="left:28px;top:283px;width:1002px;height:1px;background:#d5d5d5"></div>
<div class="a" style="left:0;top:283px;width:27px;height:1px;background:#9c9c9c"></div>
<div class="a" style="left:0;top:284px;width:27px;height:1px;background:#ececec"></div>
<div class="a" style="left:28px;top:298px;width:1002px;height:1px;background:#d5d5d5"></div>
<div class="a" style="left:0;top:298px;width:27px;height:1px;background:#9c9c9c"></div>
<div class="a" style="left:0;top:299px;width:27px;height:1px;background:#ececec"></div>
<div class="a" style="left:28px;top:313px;width:1002px;height:1px;background:#d5d5d5"></div>
<div class="a" style="left:0;top:313px;width:27px;height:1px;background:#9c9c9c"></div>
<div class="a" style="left:0;top:314px;width:27px;height:1px;background:#ececec"></div>
<div class="a" style="left:28px;top:328px;width:1002px;height:1px;background:#d5d5d5"></div>
<div class="a" style="left:0;top:328px;width:27px;height:1px;background:#9c9c9c"></div>
<div class="a" style="left:0;top:329px;width:27px;height:1px;background:#ececec"></div>
<div class="a" style="left:28px;top:343px;width:1002px;height:1px;background:#d5d5d5"></div>
<div class="a" style="left:0;top:343px;width:27px;height:1px;background:#9c9c9c"></div>
<div class="a" style="left:0;top:344px;width:27px;height:1px;background:#ececec"></div>
<div class="a" style="left:28px;top:358px;width:1002px;height:1px;background:#d5d5d5"></div>
<div class="a" style="left:0;top:358px;width:27px;height:1px;background:#9c9c9c"></div>
<div class="a" style="left:0;top:359px;width:27px;height:1px;background:#ececec"></div>
<div class="a" style="left:28px;top:373px;width:1002px;height:1px;background:#d5d5d5"></div>
<div class="a" style="left:0;top:373px;width:27px;height:1px;background:#9c9c9c"></div>
<div class="a" style="left:0;top:374px;width:27px;height:1px;background:#ececec"></div>
<div class="a" style="left:28px;top:388px;width:1002px;height:1px;background:#d5d5d5"></div>
<div class="a" style="left:0;top:388px;width:27px;height:1px;background:#9c9c9c"></div>
<div class="a" style="left:0;top:389px;width:27px;height:1px;background:#ececec"></div>
<div class="a" style="left:28px;top:403px;width:1002px;height:1px;background:#d5d5d5"></div>
<div class="a" style="left:0;top:403px;width:27px;height:1px;background:#9c9c9c"></div>
<div class="a" style="left:0;top:404px;width:27px;height:1px;background:#ececec"></div>
<div class="a" style="left:28px;top:418px;width:1002px;height:1px;background:#d5d5d5"></div>
<div class="a" style="left:0;top:418px;width:27px;height:1px;background:#9c9c9c"></div>
<div class="a" style="left:0;top:419px;width:27px;height:1px;background:#ececec"></div>
<div class="a" style="left:28px;top:433px;width:1002px;height:1px;background:#d5d5d5"></div>
<div class="a" style="left:0;top:433px;width:27px;height:1px;background:#9c9c9c"></div>
<div class="a" style="left:0;top:434px;width:27px;height:1px;background:#ececec"></div>
<div class="a" style="left:28px;top:448px;width:1002px;height:1px;background:#d5d5d5"></div>
<div class="a" style="left:0;top:448px;width:27px;height:1px;background:#9c9c9c"></div>
<div class="a" style="left:0;top:449px;width:27px;height:1px;background:#ececec"></div>
<div class="a" style="left:28px;top:463px;width:1002px;height:1px;background:#d5d5d5"></div>
<div class="a" style="left:0;top:463px;width:27px;height:1px;background:#9c9c9c"></div>
<div class="a" style="left:0;top:464px;width:27px;height:1px;background:#ececec"></div>
<div class="a" style="left:28px;top:478px;width:1002px;height:1px;background:#d5d5d5"></div>
<div class="a" style="left:0;top:478px;width:27px;height:1px;background:#9c9c9c"></div>
<div class="a" style="left:0;top:479px;width:27px;height:1px;background:#ececec"></div>
<div class="a" style="left:28px;top:493px;width:1002px;height:1px;background:#d5d5d5"></div>
<div class="a" style="left:0;top:493px;width:27px;height:1px;background:#9c9c9c"></div>
<div class="a" style="left:0;top:494px;width:27px;height:1px;background:#ececec"></div>
<div class="a" style="left:28px;top:508px;width:1002px;height:1px;background:#d5d5d5"></div>
<div class="a" style="left:0;top:508px;width:27px;height:1px;background:#9c9c9c"></div>
<div class="a" style="left:0;top:509px;width:27px;height:1px;background:#ececec"></div>
<div class="a" style="left:28px;top:523px;width:1002px;height:1px;background:#d5d5d5"></div>
<div class="a" style="left:0;top:523px;width:27px;height:1px;background:#9c9c9c"></div>
<div class="a" style="left:0;top:524px;width:27px;height:1px;background:#ececec"></div>
<div class="a" style="left:28px;top:538px;width:1002px;height:1px;background:#d5d5d5"></div>
<div class="a" style="left:0;top:538px;width:27px;height:1px;background:#9c9c9c"></div>
<div class="a" style="left:0;top:539px;width:27px;height:1px;background:#ececec"></div>
<div class="a" style="left:28px;top:553px;width:1002px;height:1px;background:#d5d5d5"></div>
<div class="a" style="left:0;top:553px;width:27px;height:1px;background:#9c9c9c"></div>
<div class="a" style="left:0;top:554px;width:27px;height:1px;background:#ececec"></div>
<div class="a" style="left:28px;top:568px;width:1002px;height:1px;background:#d5d5d5"></div>
<div class="a" style="left:0;top:568px;width:27px;height:1px;background:#9c9c9c"></div>
<div class="a" style="left:0;top:569px;width:27px;height:1px;background:#ececec"></div>
<div class="a" style="left:28px;top:583px;width:1002px;height:1px;background:#d5d5d5"></div>
<div class="a" style="left:0;top:583px;width:27px;height:1px;background:#9c9c9c"></div>
<div class="a" style="left:0;top:584px;width:27px;height:1px;background:#ececec"></div>
<div class="a" style="left:28px;top:598px;width:1002px;height:1px;background:#d5d5d5"></div>
<div class="a" style="left:0;top:598px;width:27px;height:1px;background:#9c9c9c"></div>
<div class="a" style="left:0;top:599px;width:27px;height:1px;background:#ececec"></div>
<div class="a" style="left:28px;top:613px;width:1002px;height:1px;background:#d5d5d5"></div>
<div class="a" style="left:0;top:613px;width:27px;height:1px;background:#9c9c9c"></div>
<div class="a" style="left:0;top:614px;width:27px;height:1px;background:#ececec"></div>
<div class="a" style="left:28px;top:628px;width:1002px;height:1px;background:#d5d5d5"></div>
<div class="a" style="left:0;top:628px;width:27px;height:1px;background:#9c9c9c"></div>
<div class="a" style="left:0;top:629px;width:27px;height:1px;background:#ececec"></div>
<div class="a" style="left:28px;top:643px;width:1002px;height:1px;background:#d5d5d5"></div>
<div class="a" style="left:0;top:643px;width:27px;height:1px;background:#9c9c9c"></div>
<div class="a" style="left:0;top:644px;width:27px;height:1px;background:#ececec"></div>
<div class="a" style="left:28px;top:658px;width:1002px;height:1px;background:#d5d5d5"></div>
<div class="a" style="left:0;top:658px;width:27px;height:1px;background:#9c9c9c"></div>
<div class="a" style="left:0;top:659px;width:27px;height:1px;background:#ececec"></div>
<div class="a" style="left:28px;top:673px;width:1002px;height:1px;background:#d5d5d5"></div>
<div class="a" style="left:0;top:673px;width:27px;height:1px;background:#9c9c9c"></div>
<div class="a" style="left:0;top:674px;width:27px;height:1px;background:#ececec"></div>
<div class="a" style="left:28px;top:688px;width:1002px;height:1px;background:#d5d5d5"></div>
<div class="a" style="left:0;top:688px;width:27px;height:1px;background:#9c9c9c"></div>
<div class="a" style="left:0;top:689px;width:27px;height:1px;background:#ececec"></div>
<div class="a" style="left:28px;top:703px;width:1002px;height:1px;background:#d5d5d5"></div>
<div class="a" style="left:0;top:703px;width:27px;height:1px;background:#9c9c9c"></div>
<div class="a" style="left:0;top:704px;width:27px;height:1px;background:#ececec"></div>
<div class="a" style="left:28px;top:718px;width:1002px;height:1px;background:#d5d5d5"></div>
<div class="a" style="left:0;top:718px;width:27px;height:1px;background:#9c9c9c"></div>
<div class="a" style="left:0;top:719px;width:27px;height:1px;background:#ececec"></div>
<div class="a" style="left:28px;top:733px;width:1002px;height:1px;background:#d5d5d5"></div>
<div class="a" style="left:0;top:733px;width:27px;height:1px;background:#9c9c9c"></div>
<div class="a" style="left:0;top:734px;width:27px;height:1px;background:#ececec"></div>
<div class="a" style="left:91px;top:179px;width:1px;height:554px;background:#d5d5d5"></div>
<div class="a" style="left:91px;top:166px;width:1px;height:13px;background:#a8a8a8"></div>
<div class="a" style="left:161px;top:179px;width:1px;height:554px;background:#d5d5d5"></div>
<div class="a" style="left:161px;top:166px;width:1px;height:13px;background:#a8a8a8"></div>
<div class="a" style="left:231px;top:179px;width:1px;height:554px;background:#d5d5d5"></div>
<div class="a" style="left:231px;top:166px;width:1px;height:13px;background:#a8a8a8"></div>
<div class="a" style="left:301px;top:179px;width:1px;height:554px;background:#d5d5d5"></div>
<div class="a" style="left:301px;top:166px;width:1px;height:13px;background:#a8a8a8"></div>
<div class="a" style="left:371px;top:179px;width:1px;height:554px;background:#d5d5d5"></div>
<div class="a" style="left:371px;top:166px;width:1px;height:13px;background:#a8a8a8"></div>
<div class="a" style="left:441px;top:179px;width:1px;height:554px;background:#d5d5d5"></div>
<div class="a" style="left:441px;top:166px;width:1px;height:13px;background:#a8a8a8"></div>
<div class="a" style="left:511px;top:179px;width:1px;height:554px;background:#d5d5d5"></div>
<div class="a" style="left:511px;top:166px;width:1px;height:13px;background:#a8a8a8"></div>
<div class="a" style="left:581px;top:179px;width:1px;height:554px;background:#d5d5d5"></div>
<div class="a" style="left:581px;top:166px;width:1px;height:13px;background:#a8a8a8"></div>
<div class="a" style="left:651px;top:179px;width:1px;height:554px;background:#d5d5d5"></div>
<div class="a" style="left:651px;top:166px;width:1px;height:13px;background:#a8a8a8"></div>
<div class="a" style="left:721px;top:179px;width:1px;height:554px;background:#d5d5d5"></div>
<div class="a" style="left:721px;top:166px;width:1px;height:13px;background:#a8a8a8"></div>
<div class="a" style="left:791px;top:179px;width:1px;height:554px;background:#d5d5d5"></div>
<div class="a" style="left:791px;top:166px;width:1px;height:13px;background:#a8a8a8"></div>
<div class="a" style="left:861px;top:179px;width:1px;height:554px;background:#d5d5d5"></div>
<div class="a" style="left:861px;top:166px;width:1px;height:13px;background:#a8a8a8"></div>
<div class="a" style="left:931px;top:179px;width:1px;height:554px;background:#d5d5d5"></div>
<div class="a" style="left:931px;top:166px;width:1px;height:13px;background:#a8a8a8"></div>
<div class="a" style="left:1007px;top:179px;width:1px;height:554px;background:#d5d5d5"></div>
<div class="a" style="left:1007px;top:166px;width:1px;height:13px;background:#a8a8a8"></div>
<div class="t" style="left:28px;top:167px;width:63px;text-align:center;font-size:11px;color:#4b4b4b;">A</div>
<div class="t" style="left:92px;top:167px;width:69px;text-align:center;font-size:11px;color:#4b4b4b;">B</div>
<div class="t" style="left:162px;top:167px;width:69px;text-align:center;font-size:11px;color:#4b4b4b;">C</div>
<div class="t" style="left:232px;top:167px;width:69px;text-align:center;font-size:11px;color:#4b4b4b;">D</div>
<div class="t" style="left:302px;top:167px;width:69px;text-align:center;font-size:11px;color:#4b4b4b;">E</div>
<div class="t" style="left:372px;top:167px;width:69px;text-align:center;font-size:11px;color:#4b4b4b;">F</div>
<div class="t" style="left:442px;top:167px;width:69px;text-align:center;font-size:11px;color:#4b4b4b;">G</div>
<div class="t" style="left:512px;top:167px;width:69px;text-align:center;font-size:11px;color:#4b4b4b;">H</div>
<div class="t" style="left:582px;top:167px;width:69px;text-align:center;font-size:11px;color:#4b4b4b;">I</div>
<div class="t" style="left:652px;top:167px;width:69px;text-align:center;font-size:11px;color:#4b4b4b;">J</div>
<div class="t" style="left:722px;top:167px;width:69px;text-align:center;font-size:11px;color:#4b4b4b;">K</div>
<div class="t" style="left:792px;top:167px;width:69px;text-align:center;font-size:11px;color:#4b4b4b;">L</div>
<div class="a" style="left:862px;top:166px;width:69px;height:12px;background:linear-gradient(#a9a9a9,#969696)"></div>
<div class="t" style="left:862px;top:167px;width:69px;text-align:center;font-size:11px;color:#4b4b4b;color:#fff;">M</div>
<div class="t" style="left:932px;top:167px;width:75px;text-align:center;font-size:11px;color:#4b4b4b;">N</div>
<div class="t" style="left:-1px;top:181px;width:27px;text-align:center;font-size:11.5px;color:#333;">1</div>
<div class="t" style="left:-1px;top:196px;width:27px;text-align:center;font-size:11.5px;color:#333;">2</div>
<div class="t" style="left:-1px;top:211px;width:27px;text-align:center;font-size:11.5px;color:#333;">3</div>
<div class="t" style="left:-1px;top:226px;width:27px;text-align:center;font-size:11.5px;color:#333;">4</div>
<div class="t" style="left:-1px;top:241px;width:27px;text-align:center;font-size:11.5px;color:#333;">5</div>
<div class="t" style="left:-1px;top:256px;width:27px;text-align:center;font-size:11.5px;color:#333;">6</div>
<div class="t" style="left:-1px;top:271px;width:27px;text-align:center;font-size:11.5px;color:#333;">7</div>
<div class="t" style="left:-1px;top:286px;width:27px;text-align:center;font-size:11.5px;color:#333;">8</div>
<div class="t" style="left:-1px;top:301px;width:27px;text-align:center;font-size:11.5px;color:#333;">9</div>
<div class="t" style="left:-1px;top:316px;width:27px;text-align:center;font-size:11.5px;color:#333;">10</div>
<div class="t" style="left:-1px;top:331px;width:27px;text-align:center;font-size:11.5px;color:#333;">11</div>
<div class="t" style="left:-1px;top:346px;width:27px;text-align:center;font-size:11.5px;color:#333;">12</div>
<div class="t" style="left:-1px;top:361px;width:27px;text-align:center;font-size:11.5px;color:#333;">13</div>
<div class="t" style="left:-1px;top:376px;width:27px;text-align:center;font-size:11.5px;color:#333;">14</div>
<div class="t" style="left:-1px;top:391px;width:27px;text-align:center;font-size:11.5px;color:#333;">15</div>
<div class="t" style="left:-1px;top:406px;width:27px;text-align:center;font-size:11.5px;color:#333;">16</div>
<div class="t" style="left:-1px;top:421px;width:27px;text-align:center;font-size:11.5px;color:#333;">17</div>
<div class="a" style="left:0;top:433px;width:27px;height:16px;background:#9b9b9b;border-top:1px solid #7a7a7a;border-bottom:1px solid #7a7a7a"></div>
<div class="t" style="left:-1px;top:436px;width:27px;text-align:center;font-size:11.5px;color:#333;color:#fff;">18</div>
<div class="t" style="left:-1px;top:451px;width:27px;text-align:center;font-size:11.5px;color:#333;">19</div>
<div class="t" style="left:-1px;top:466px;width:27px;text-align:center;font-size:11.5px;color:#333;">20</div>
<div class="t" style="left:-1px;top:481px;width:27px;text-align:center;font-size:11.5px;color:#333;">21</div>
<div class="t" style="left:-1px;top:496px;width:27px;text-align:center;font-size:11.5px;color:#333;">22</div>
<div class="t" style="left:-1px;top:511px;width:27px;text-align:center;font-size:11.5px;color:#333;">23</div>
<div class="t" style="left:-1px;top:526px;width:27px;text-align:center;font-size:11.5px;color:#333;">24</div>
<div class="t" style="left:-1px;top:541px;width:27px;text-align:center;font-size:11.5px;color:#333;">25</div>
<div class="t" style="left:-1px;top:556px;width:27px;text-align:center;font-size:11.5px;color:#333;">26</div>
<div class="t" style="left:-1px;top:571px;width:27px;text-align:center;font-size:11.5px;color:#333;">27</div>
<div class="t" style="left:-1px;top:586px;width:27px;text-align:center;font-size:11.5px;color:#333;">28</div>
<div class="t" style="left:-1px;top:601px;width:27px;text-align:center;font-size:11.5px;color:#333;">29</div>
<div class="t" style="left:-1px;top:616px;width:27px;text-align:center;font-size:11.5px;color:#333;">30</div>
<div class="t" style="left:-1px;top:631px;width:27px;text-align:center;font-size:11.5px;color:#333;">31</div>
<div class="t" style="left:-1px;top:646px;width:27px;text-align:center;font-size:11.5px;color:#333;">32</div>
<div class="t" style="left:-1px;top:661px;width:27px;text-align:center;font-size:11.5px;color:#333;">33</div>
<div class="t" style="left:-1px;top:676px;width:27px;text-align:center;font-size:11.5px;color:#333;">34</div>
<div class="t" style="left:-1px;top:691px;width:27px;text-align:center;font-size:11.5px;color:#333;">35</div>
<div class="t" style="left:-1px;top:706px;width:27px;text-align:center;font-size:11.5px;color:#333;">36</div>
<div class="t" style="left:-1px;top:721px;width:27px;text-align:center;font-size:11.5px;color:#333;">37</div>
<svg class="a" style="left:0;top:166px" width="27" height="12"><polygon points="16,10.5 25.5,10.5 25.5,1.5" fill="#fff"/><polyline points="16,10.5 25.5,10.5 25.5,1.5" fill="none" stroke="#7a7a7a" stroke-width="1"/></svg>
<div class="a" style="left:27px;top:166px;width:1px;height:13px;background:#9a9a9a"></div>
<div class="t" style="left:94px;top:181px;font-size:10.6px;color:#000;font-weight:bold;">January</div>
<div class="t" style="left:164px;top:181px;font-size:10.6px;color:#000;font-weight:bold;">February</div>
<div class="t" style="left:234px;top:181px;font-size:10.6px;color:#000;font-weight:bold;">March</div>
<div class="t" style="left:304px;top:181px;font-size:10.6px;color:#000;font-weight:bold;">April</div>
<div class="t" style="left:374px;top:181px;font-size:10.6px;color:#000;font-weight:bold;">May</div>
<div class="t" style="left:444px;top:181px;font-size:10.6px;color:#000;font-weight:bold;">June</div>
<div class="t" style="left:514px;top:181px;font-size:10.6px;color:#000;font-weight:bold;">July</div>
<div class="t" style="left:584px;top:181px;font-size:10.6px;color:#000;font-weight:bold;">August</div>
<div class="t" style="left:654px;top:181px;font-size:10.6px;color:#000;font-weight:bold;">September</div>
<div class="t" style="left:724px;top:181px;font-size:10.6px;color:#000;font-weight:bold;">October</div>
<div class="t" style="left:794px;top:181px;font-size:10.6px;color:#000;font-weight:bold;">November</div>
<div class="t" style="left:864px;top:181px;font-size:10.6px;color:#000;font-weight:bold;">December</div>
<div class="t" style="left:934px;top:181px;font-size:10.6px;color:#000;font-weight:bold;">Total</div>
<div class="t" style="left:30px;top:196px;font-size:10.6px;color:#000;">Apples</div>
<div class="t" style="left:98px;top:196px;font-size:10.6px;color:#000;">$</div>
<div class="t" style="left:91px;width:64px;text-align:right;top:196px;font-size:10.6px;letter-spacing:0.35px;color:#000;">1,614.98</div>
<div class="t" style="left:168px;top:196px;font-size:10.6px;color:#000;">$</div>
<div class="t" style="left:161px;width:64px;text-align:right;top:196px;font-size:10.6px;letter-spacing:0.35px;color:#000;">1,963.72</div>
<div class="t" style="left:238px;top:196px;font-size:10.6px;color:#000;">$</div>
<div class="t" style="left:231px;width:64px;text-align:right;top:196px;font-size:10.6px;letter-spacing:0.35px;color:#000;">1,936.97</div>
<div class="t" style="left:308px;top:196px;font-size:10.6px;color:#000;">$</div>
<div class="t" style="left:301px;width:64px;text-align:right;top:196px;font-size:10.6px;letter-spacing:0.35px;color:#000;">1,346.52</div>
<div class="t" style="left:378px;top:196px;font-size:10.6px;color:#000;">$</div>
<div class="t" style="left:371px;width:64px;text-align:right;top:196px;font-size:10.6px;letter-spacing:0.35px;color:#000;">1,023.68</div>
<div class="t" style="left:448px;top:196px;font-size:10.6px;color:#000;">$</div>
<div class="t" style="left:441px;width:64px;text-align:right;top:196px;font-size:10.6px;letter-spacing:0.35px;color:#000;">1,877.36</div>
<div class="t" style="left:518px;top:196px;font-size:10.6px;color:#000;">$</div>
<div class="t" style="left:511px;width:64px;text-align:right;top:196px;font-size:10.6px;letter-spacing:0.35px;color:#000;">1,852.26</div>
<div class="t" style="left:588px;top:196px;font-size:10.6px;color:#000;">$</div>
<div class="t" style="left:581px;width:64px;text-align:right;top:196px;font-size:10.6px;letter-spacing:0.35px;color:#000;">2,052.98</div>
<div class="t" style="left:658px;top:196px;font-size:10.6px;color:#000;">$</div>
<div class="t" style="left:651px;width:64px;text-align:right;top:196px;font-size:10.6px;letter-spacing:0.35px;color:#000;">1,637.86</div>
<div class="t" style="left:728px;top:196px;font-size:10.6px;color:#000;">$</div>
<div class="t" style="left:721px;width:64px;text-align:right;top:196px;font-size:10.6px;letter-spacing:0.35px;color:#000;">1,163.08</div>
<div class="t" style="left:798px;top:196px;font-size:10.6px;color:#000;">$</div>
<div class="t" style="left:791px;width:64px;text-align:right;top:196px;font-size:10.6px;letter-spacing:0.35px;color:#000;">1,593.27</div>
<div class="t" style="left:868px;top:196px;font-size:10.6px;color:#000;">$</div>
<div class="t" style="left:861px;width:64px;text-align:right;top:196px;font-size:10.6px;letter-spacing:0.35px;color:#000;">1,005.03</div>
<div class="t" style="left:938px;top:196px;font-size:10.6px;color:#000;font-weight:bold;">$</div>
<div class="t" style="left:931px;width:70px;text-align:right;top:196px;font-size:10.6px;letter-spacing:0.35px;color:#000;font-weight:bold;">19,067.71</div>
<div class="t" style="left:30px;top:211px;font-size:10.6px;color:#000;">Apricots</div>
<div class="t" style="left:98px;top:211px;font-size:10.6px;color:#000;">$</div>
<div class="t" style="left:91px;width:64px;text-align:right;top:211px;font-size:10.6px;letter-spacing:0.35px;color:#000;">855.86</div>
<div class="t" style="left:168px;top:211px;font-size:10.6px;color:#000;">$</div>
<div class="t" style="left:161px;width:64px;text-align:right;top:211px;font-size:10.6px;letter-spacing:0.35px;color:#000;">1,852.66</div>
<div class="t" style="left:238px;top:211px;font-size:10.6px;color:#000;">$</div>
<div class="t" style="left:231px;width:64px;text-align:right;top:211px;font-size:10.6px;letter-spacing:0.35px;color:#000;">1,369.23</div>
<div class="t" style="left:308px;top:211px;font-size:10.6px;color:#000;">$</div>
<div class="t" style="left:301px;width:64px;text-align:right;top:211px;font-size:10.6px;letter-spacing:0.35px;color:#000;">1,992.54</div>
<div class="t" style="left:378px;top:211px;font-size:10.6px;color:#000;">$</div>
<div class="t" style="left:371px;width:64px;text-align:right;top:211px;font-size:10.6px;letter-spacing:0.35px;color:#000;">1,389.12</div>
<div class="t" style="left:448px;top:211px;font-size:10.6px;color:#000;">$</div>
<div class="t" style="left:441px;width:64px;text-align:right;top:211px;font-size:10.6px;letter-spacing:0.35px;color:#000;">1,508.93</div>
<div class="t" style="left:518px;top:211px;font-size:10.6px;color:#000;">$</div>
<div class="t" style="left:511px;width:64px;text-align:right;top:211px;font-size:10.6px;letter-spacing:0.35px;color:#000;">2,154.54</div>
<div class="t" style="left:588px;top:211px;font-size:10.6px;color:#000;">$</div>
<div class="t" style="left:581px;width:64px;text-align:right;top:211px;font-size:10.6px;letter-spacing:0.35px;color:#000;">696.74</div>
<div class="t" style="left:658px;top:211px;font-size:10.6px;color:#000;">$</div>
<div class="t" style="left:651px;width:64px;text-align:right;top:211px;font-size:10.6px;letter-spacing:0.35px;color:#000;">683.79</div>
<div class="t" style="left:728px;top:211px;font-size:10.6px;color:#000;">$</div>
<div class="t" style="left:721px;width:64px;text-align:right;top:211px;font-size:10.6px;letter-spacing:0.35px;color:#000;">1,386.52</div>
<div class="t" style="left:798px;top:211px;font-size:10.6px;color:#000;">$</div>
<div class="t" style="left:791px;width:64px;text-align:right;top:211px;font-size:10.6px;letter-spacing:0.35px;color:#000;">1,582.21</div>
<div class="t" style="left:868px;top:211px;font-size:10.6px;color:#000;">$</div>
<div class="t" style="left:861px;width:64px;text-align:right;top:211px;font-size:10.6px;letter-spacing:0.35px;color:#000;">824.17</div>
<div class="t" style="left:938px;top:211px;font-size:10.6px;color:#000;font-weight:bold;">$</div>
<div class="t" style="left:931px;width:70px;text-align:right;top:211px;font-size:10.6px;letter-spacing:0.35px;color:#000;font-weight:bold;">16,296.31</div>
<div class="t" style="left:30px;top:226px;font-size:10.6px;color:#000;">Avocado</div>
<div class="t" style="left:98px;top:226px;font-size:10.6px;color:#000;">$</div>
<div class="t" style="left:91px;width:64px;text-align:right;top:226px;font-size:10.6px;letter-spacing:0.35px;color:#000;">1,959.99</div>
<div class="t" style="left:168px;top:226px;font-size:10.6px;color:#000;">$</div>
<div class="t" style="left:161px;width:64px;text-align:right;top:226px;font-size:10.6px;letter-spacing:0.35px;color:#000;">2,178.70</div>
<div class="t" style="left:238px;top:226px;font-size:10.6px;color:#000;">$</div>
<div class="t" style="left:231px;width:64px;text-align:right;top:226px;font-size:10.6px;letter-spacing:0.35px;color:#000;">1,268.61</div>
<div class="t" style="left:308px;top:226px;font-size:10.6px;color:#000;">$</div>
<div class="t" style="left:301px;width:64px;text-align:right;top:226px;font-size:10.6px;letter-spacing:0.35px;color:#000;">1,821.73</div>
<div class="t" style="left:378px;top:226px;font-size:10.6px;color:#000;">$</div>
<div class="t" style="left:371px;width:64px;text-align:right;top:226px;font-size:10.6px;letter-spacing:0.35px;color:#000;">1,790.18</div>
<div class="t" style="left:448px;top:226px;font-size:10.6px;color:#000;">$</div>
<div class="t" style="left:441px;width:64px;text-align:right;top:226px;font-size:10.6px;letter-spacing:0.35px;color:#000;">1,426.75</div>
<div class="t" style="left:518px;top:226px;font-size:10.6px;color:#000;">$</div>
<div class="t" style="left:511px;width:64px;text-align:right;top:226px;font-size:10.6px;letter-spacing:0.35px;color:#000;">1,809.64</div>
<div class="t" style="left:588px;top:226px;font-size:10.6px;color:#000;">$</div>
<div class="t" style="left:581px;width:64px;text-align:right;top:226px;font-size:10.6px;letter-spacing:0.35px;color:#000;">2,342.63</div>
<div class="t" style="left:658px;top:226px;font-size:10.6px;color:#000;">$</div>
<div class="t" style="left:651px;width:64px;text-align:right;top:226px;font-size:10.6px;letter-spacing:0.35px;color:#000;">1,358.74</div>
<div class="t" style="left:728px;top:226px;font-size:10.6px;color:#000;">$</div>
<div class="t" style="left:721px;width:64px;text-align:right;top:226px;font-size:10.6px;letter-spacing:0.35px;color:#000;">1,581.97</div>
<div class="t" style="left:798px;top:226px;font-size:10.6px;color:#000;">$</div>
<div class="t" style="left:791px;width:64px;text-align:right;top:226px;font-size:10.6px;letter-spacing:0.35px;color:#000;">2,275.47</div>
<div class="t" style="left:868px;top:226px;font-size:10.6px;color:#000;">$</div>
<div class="t" style="left:861px;width:64px;text-align:right;top:226px;font-size:10.6px;letter-spacing:0.35px;color:#000;">599.98</div>
<div class="t" style="left:938px;top:226px;font-size:10.6px;color:#000;font-weight:bold;">$</div>
<div class="t" style="left:931px;width:70px;text-align:right;top:226px;font-size:10.6px;letter-spacing:0.35px;color:#000;font-weight:bold;">20,414.38</div>
<div class="t" style="left:30px;top:241px;font-size:10.6px;color:#000;">Banana</div>
<div class="t" style="left:98px;top:241px;font-size:10.6px;color:#000;">$</div>
<div class="t" style="left:91px;width:64px;text-align:right;top:241px;font-size:10.6px;letter-spacing:0.35px;color:#000;">1,109.88</div>
<div class="t" style="left:168px;top:241px;font-size:10.6px;color:#000;">$</div>
<div class="t" style="left:161px;width:64px;text-align:right;top:241px;font-size:10.6px;letter-spacing:0.35px;color:#000;">1,326.43</div>
<div class="t" style="left:238px;top:241px;font-size:10.6px;color:#000;">$</div>
<div class="t" style="left:231px;width:64px;text-align:right;top:241px;font-size:10.6px;letter-spacing:0.35px;color:#000;">2,352.67</div>
<div class="t" style="left:308px;top:241px;font-size:10.6px;color:#000;">$</div>
<div class="t" style="left:301px;width:64px;text-align:right;top:241px;font-size:10.6px;letter-spacing:0.35px;color:#000;">1,274.99</div>
<div class="t" style="left:378px;top:241px;font-size:10.6px;color:#000;">$</div>
<div class="t" style="left:371px;width:64px;text-align:right;top:241px;font-size:10.6px;letter-spacing:0.35px;color:#000;">845.09</div>
<div class="t" style="left:448px;top:241px;font-size:10.6px;color:#000;">$</div>
<div class="t" style="left:441px;width:64px;text-align:right;top:241px;font-size:10.6px;letter-spacing:0.35px;color:#000;">1,764.28</div>
<div class="t" style="left:518px;top:241px;font-size:10.6px;color:#000;">$</div>
<div class="t" style="left:511px;width:64px;text-align:right;top:241px;font-size:10.6px;letter-spacing:0.35px;color:#000;">1,829.11</div>
<div class="t" style="left:588px;top:241px;font-size:10.6px;color:#000;">$</div>
<div class="t" style="left:581px;width:64px;text-align:right;top:241px;font-size:10.6px;letter-spacing:0.35px;color:#000;">1,881.85</div>
<div class="t" style="left:658px;top:241px;font-size:10.6px;color:#000;">$</div>
<div class="t" style="left:651px;width:64px;text-align:right;top:241px;font-size:10.6px;letter-spacing:0.35px;color:#000;">1,160.49</div>
<div class="t" style="left:728px;top:241px;font-size:10.6px;color:#000;">$</div>
<div class="t" style="left:721px;width:64px;text-align:right;top:241px;font-size:10.6px;letter-spacing:0.35px;color:#000;">1,533.35</div>
<div class="t" style="left:798px;top:241px;font-size:10.6px;color:#000;">$</div>
<div class="t" style="left:791px;width:64px;text-align:right;top:241px;font-size:10.6px;letter-spacing:0.35px;color:#000;">2,195.65</div>
<div class="t" style="left:868px;top:241px;font-size:10.6px;color:#000;">$</div>
<div class="t" style="left:861px;width:64px;text-align:right;top:241px;font-size:10.6px;letter-spacing:0.35px;color:#000;">1,197.99</div>
<div class="t" style="left:938px;top:241px;font-size:10.6px;color:#000;font-weight:bold;">$</div>
<div class="t" style="left:931px;width:70px;text-align:right;top:241px;font-size:10.6px;letter-spacing:0.35px;color:#000;font-weight:bold;">18,471.79</div>
<div class="t" style="left:30px;top:256px;font-size:10.6px;color:#000;">Blueberries</div>
<div class="t" style="left:98px;top:256px;font-size:10.6px;color:#000;">$</div>
<div class="t" style="left:91px;width:64px;text-align:right;top:256px;font-size:10.6px;letter-spacing:0.35px;color:#000;">743.17</div>
<div class="t" style="left:168px;top:256px;font-size:10.6px;color:#000;">$</div>
<div class="t" style="left:161px;width:64px;text-align:right;top:256px;font-size:10.6px;letter-spacing:0.35px;color:#000;">1,704.73</div>
<div class="t" style="left:238px;top:256px;font-size:10.6px;color:#000;">$</div>
<div class="t" style="left:231px;width:64px;text-align:right;top:256px;font-size:10.6px;letter-spacing:0.35px;color:#000;">1,173.81</div>
<div class="t" style="left:308px;top:256px;font-size:10.6px;color:#000;">$</div>
<div class="t" style="left:301px;width:64px;text-align:right;top:256px;font-size:10.6px;letter-spacing:0.35px;color:#000;">977.98</div>
<div class="t" style="left:378px;top:256px;font-size:10.6px;color:#000;">$</div>
<div class="t" style="left:371px;width:64px;text-align:right;top:256px;font-size:10.6px;letter-spacing:0.35px;color:#000;">1,841.09</div>
<div class="t" style="left:448px;top:256px;font-size:10.6px;color:#000;">$</div>
<div class="t" style="left:441px;width:64px;text-align:right;top:256px;font-size:10.6px;letter-spacing:0.35px;color:#000;">1,740.55</div>
<div class="t" style="left:518px;top:256px;font-size:10.6px;color:#000;">$</div>
<div class="t" style="left:511px;width:64px;text-align:right;top:256px;font-size:10.6px;letter-spacing:0.35px;color:#000;">2,027.69</div>
<div class="t" style="left:588px;top:256px;font-size:10.6px;color:#000;">$</div>
<div class="t" style="left:581px;width:64px;text-align:right;top:256px;font-size:10.6px;letter-spacing:0.35px;color:#000;">1,811.58</div>
<div class="t" style="left:658px;top:256px;font-size:10.6px;color:#000;">$</div>
<div class="t" style="left:651px;width:64px;text-align:right;top:256px;font-size:10.6px;letter-spacing:0.35px;color:#000;">1,931.99</div>
<div class="t" style="left:728px;top:256px;font-size:10.6px;color:#000;">$</div>
<div class="t" style="left:721px;width:64px;text-align:right;top:256px;font-size:10.6px;letter-spacing:0.35px;color:#000;">1,558.62</div>
<div class="t" style="left:798px;top:256px;font-size:10.6px;color:#000;">$</div>
<div class="t" style="left:791px;width:64px;text-align:right;top:256px;font-size:10.6px;letter-spacing:0.35px;color:#000;">1,419.95</div>
<div class="t" style="left:868px;top:256px;font-size:10.6px;color:#000;">$</div>
<div class="t" style="left:861px;width:64px;text-align:right;top:256px;font-size:10.6px;letter-spacing:0.35px;color:#000;">2,575.40</div>
<div class="t" style="left:938px;top:256px;font-size:10.6px;color:#000;font-weight:bold;">$</div>
<div class="t" style="left:931px;width:70px;text-align:right;top:256px;font-size:10.6px;letter-spacing:0.35px;color:#000;font-weight:bold;">19,506.56</div>
<div class="t" style="left:30px;top:271px;font-size:10.6px;color:#000;">Cantelope</div>
<div class="t" style="left:98px;top:271px;font-size:10.6px;color:#000;">$</div>
<div class="t" style="left:91px;width:64px;text-align:right;top:271px;font-size:10.6px;letter-spacing:0.35px;color:#000;">2,741.62</div>
<div class="t" style="left:168px;top:271px;font-size:10.6px;color:#000;">$</div>
<div class="t" style="left:161px;width:64px;text-align:right;top:271px;font-size:10.6px;letter-spacing:0.35px;color:#000;">1,465.17</div>
<div class="t" style="left:238px;top:271px;font-size:10.6px;color:#000;">$</div>
<div class="t" style="left:231px;width:64px;text-align:right;top:271px;font-size:10.6px;letter-spacing:0.35px;color:#000;">1,200.82</div>
<div class="t" style="left:308px;top:271px;font-size:10.6px;color:#000;">$</div>
<div class="t" style="left:301px;width:64px;text-align:right;top:271px;font-size:10.6px;letter-spacing:0.35px;color:#000;">1,291.36</div>
<div class="t" style="left:378px;top:271px;font-size:10.6px;color:#000;">$</div>
<div class="t" style="left:371px;width:64px;text-align:right;top:271px;font-size:10.6px;letter-spacing:0.35px;color:#000;">1,405.94</div>
<div class="t" style="left:448px;top:271px;font-size:10.6px;color:#000;">$</div>
<div class="t" style="left:441px;width:64px;text-align:right;top:271px;font-size:10.6px;letter-spacing:0.35px;color:#000;">2,090.44</div>
<div class="t" style="left:518px;top:271px;font-size:10.6px;color:#000;">$</div>
<div class="t" style="left:511px;width:64px;text-align:right;top:271px;font-size:10.6px;letter-spacing:0.35px;color:#000;">1,264.22</div>
<div class="t" style="left:588px;top:271px;font-size:10.6px;color:#000;">$</div>
<div class="t" style="left:581px;width:64px;text-align:right;top:271px;font-size:10.6px;letter-spacing:0.35px;color:#000;">2,016.10</div>
<div class="t" style="left:658px;top:271px;font-size:10.6px;color:#000;">$</div>
<div class="t" style="left:651px;width:64px;text-align:right;top:271px;font-size:10.6px;letter-spacing:0.35px;color:#000;">1,378.46</div>
<div class="t" style="left:728px;top:271px;font-size:10.6px;color:#000;">$</div>
<div class="t" style="left:721px;width:64px;text-align:right;top:271px;font-size:10.6px;letter-spacing:0.35px;color:#000;">2,280.93</div>
<div class="t" style="left:798px;top:271px;font-size:10.6px;color:#000;">$</div>
<div class="t" style="left:791px;width:64px;text-align:right;top:271px;font-size:10.6px;letter-spacing:0.35px;color:#000;">1,310.55</div>
<div class="t" style="left:868px;top:271px;font-size:10.6px;color:#000;">$</div>
<div class="t" style="left:861px;width:64px;text-align:right;top:271px;font-size:10.6px;letter-spacing:0.35px;color:#000;">1,312.43</div>
<div class="t" style="left:938px;top:271px;font-size:10.6px;color:#000;font-weight:bold;">$</div>
<div class="t" style="left:931px;width:70px;text-align:right;top:271px;font-size:10.6px;letter-spacing:0.35px;color:#000;font-weight:bold;">19,758.05</div>
<div class="t" style="left:30px;top:286px;font-size:10.6px;color:#000;">Cherries</div>
<div class="t" style="left:98px;top:286px;font-size:10.6px;color:#000;">$</div>
<div class="t" style="left:91px;width:64px;text-align:right;top:286px;font-size:10.6px;letter-spacing:0.35px;color:#000;">2,056.56</div>
<div class="t" style="left:168px;top:286px;font-size:10.6px;color:#000;">$</div>
<div class="t" style="left:161px;width:64px;text-align:right;top:286px;font-size:10.6px;letter-spacing:0.35px;color:#000;">803.72</div>
<div class="t" style="left:238px;top:286px;font-size:10.6px;color:#000;">$</div>
<div class="t" style="left:231px;width:64px;text-align:right;top:286px;font-size:10.6px;letter-spacing:0.35px;color:#000;">1,663.71</div>
<div class="t" style="left:308px;top:286px;font-size:10.6px;color:#000;">$</div>
<div class="t" style="left:301px;width:64px;text-align:right;top:286px;font-size:10.6px;letter-spacing:0.35px;color:#000;">617.80</div>
<div class="t" style="left:378px;top:286px;font-size:10.6px;color:#000;">$</div>
<div class="t" style="left:371px;width:64px;text-align:right;top:286px;font-size:10.6px;letter-spacing:0.35px;color:#000;">1,452.61</div>
<div class="t" style="left:448px;top:286px;font-size:10.6px;color:#000;">$</div>
<div class="t" style="left:441px;width:64px;text-align:right;top:286px;font-size:10.6px;letter-spacing:0.35px;color:#000;">1,232.50</div>
<div class="t" style="left:518px;top:286px;font-size:10.6px;color:#000;">$</div>
<div class="t" style="left:511px;width:64px;text-align:right;top:286px;font-size:10.6px;letter-spacing:0.35px;color:#000;">1,834.89</div>
<div class="t" style="left:588px;top:286px;font-size:10.6px;color:#000;">$</div>
<div class="t" style="left:581px;width:64px;text-align:right;top:286px;font-size:10.6px;letter-spacing:0.35px;color:#000;">785.29</div>
<div class="t" style="left:658px;top:286px;font-size:10.6px;color:#000;">$</div>
<div class="t" style="left:651px;width:64px;text-align:right;top:286px;font-size:10.6px;letter-spacing:0.35px;color:#000;">1,656.50</div>
<div class="t" style="left:728px;top:286px;font-size:10.6px;color:#000;">$</div>
<div class="t" style="left:721px;width:64px;text-align:right;top:286px;font-size:10.6px;letter-spacing:0.35px;color:#000;">1,549.74</div>
<div class="t" style="left:798px;top:286px;font-size:10.6px;color:#000;">$</div>
<div class="t" style="left:791px;width:64px;text-align:right;top:286px;font-size:10.6px;letter-spacing:0.35px;color:#000;">1,577.05</div>
<div class="t" style="left:868px;top:286px;font-size:10.6px;color:#000;">$</div>
<div class="t" style="left:861px;width:64px;text-align:right;top:286px;font-size:10.6px;letter-spacing:0.35px;color:#000;">1,051.68</div>
<div class="t" style="left:938px;top:286px;font-size:10.6px;color:#000;font-weight:bold;">$</div>
<div class="t" style="left:931px;width:70px;text-align:right;top:286px;font-size:10.6px;letter-spacing:0.35px;color:#000;font-weight:bold;">16,282.06</div>
<div class="t" style="left:30px;top:301px;font-size:10.6px;color:#000;">Clementine</div>
<div class="t" style="left:98px;top:301px;font-size:10.6px;color:#000;">$</div>
<div class="t" style="left:91px;width:64px;text-align:right;top:301px;font-size:10.6px;letter-spacing:0.35px;color:#000;">1,729.68</div>
<div class="t" style="left:168px;top:301px;font-size:10.6px;color:#000;">$</div>
<div class="t" style="left:161px;width:64px;text-align:right;top:301px;font-size:10.6px;letter-spacing:0.35px;color:#000;">1,448.32</div>
<div class="t" style="left:238px;top:301px;font-size:10.6px;color:#000;">$</div>
<div class="t" style="left:231px;width:64px;text-align:right;top:301px;font-size:10.6px;letter-spacing:0.35px;color:#000;">753.27</div>
<div class="t" style="left:308px;top:301px;font-size:10.6px;color:#000;">$</div>
<div class="t" style="left:301px;width:64px;text-align:right;top:301px;font-size:10.6px;letter-spacing:0.35px;color:#000;">1,402.53</div>
<div class="t" style="left:378px;top:301px;font-size:10.6px;color:#000;">$</div>
<div class="t" style="left:371px;width:64px;text-align:right;top:301px;font-size:10.6px;letter-spacing:0.35px;color:#000;">1,390.53</div>
<div class="t" style="left:448px;top:301px;font-size:10.6px;color:#000;">$</div>
<div class="t" style="left:441px;width:64px;text-align:right;top:301px;font-size:10.6px;letter-spacing:0.35px;color:#000;">880.08</div>
<div class="t" style="left:518px;top:301px;font-size:10.6px;color:#000;">$</div>
<div class="t" style="left:511px;width:64px;text-align:right;top:301px;font-size:10.6px;letter-spacing:0.35px;color:#000;">1,345.84</div>
<div class="t" style="left:588px;top:301px;font-size:10.6px;color:#000;">$</div>
<div class="t" style="left:581px;width:64px;text-align:right;top:301px;font-size:10.6px;letter-spacing:0.35px;color:#000;">854.22</div>
<div class="t" style="left:658px;top:301px;font-size:10.6px;color:#000;">$</div>
<div class="t" style="left:651px;width:64px;text-align:right;top:301px;font-size:10.6px;letter-spacing:0.35px;color:#000;">851.32</div>
<div class="t" style="left:728px;top:301px;font-size:10.6px;color:#000;">$</div>
<div class="t" style="left:721px;width:64px;text-align:right;top:301px;font-size:10.6px;letter-spacing:0.35px;color:#000;">1,281.81</div>
<div class="t" style="left:798px;top:301px;font-size:10.6px;color:#000;">$</div>
<div class="t" style="left:791px;width:64px;text-align:right;top:301px;font-size:10.6px;letter-spacing:0.35px;color:#000;">2,609.29</div>
<div class="t" style="left:868px;top:301px;font-size:10.6px;color:#000;">$</div>
<div class="t" style="left:861px;width:64px;text-align:right;top:301px;font-size:10.6px;letter-spacing:0.35px;color:#000;">787.37</div>
<div class="t" style="left:938px;top:301px;font-size:10.6px;color:#000;font-weight:bold;">$</div>
<div class="t" style="left:931px;width:70px;text-align:right;top:301px;font-size:10.6px;letter-spacing:0.35px;color:#000;font-weight:bold;">15,334.25</div>
<div class="t" style="left:30px;top:316px;font-size:10.6px;color:#000;">Grapefruit</div>
<div class="t" style="left:98px;top:316px;font-size:10.6px;color:#000;">$</div>
<div class="t" style="left:91px;width:64px;text-align:right;top:316px;font-size:10.6px;letter-spacing:0.35px;color:#000;">1,937.37</div>
<div class="t" style="left:168px;top:316px;font-size:10.6px;color:#000;">$</div>
<div class="t" style="left:161px;width:64px;text-align:right;top:316px;font-size:10.6px;letter-spacing:0.35px;color:#000;">2,094.81</div>
<div class="t" style="left:238px;top:316px;font-size:10.6px;color:#000;">$</div>
<div class="t" style="left:231px;width:64px;text-align:right;top:316px;font-size:10.6px;letter-spacing:0.35px;color:#000;">1,244.12</div>
<div class="t" style="left:308px;top:316px;font-size:10.6px;color:#000;">$</div>
<div class="t" style="left:301px;width:64px;text-align:right;top:316px;font-size:10.6px;letter-spacing:0.35px;color:#000;">1,475.84</div>
<div class="t" style="left:378px;top:316px;font-size:10.6px;color:#000;">$</div>
<div class="t" style="left:371px;width:64px;text-align:right;top:316px;font-size:10.6px;letter-spacing:0.35px;color:#000;">1,227.50</div>
<div class="t" style="left:448px;top:316px;font-size:10.6px;color:#000;">$</div>
<div class="t" style="left:441px;width:64px;text-align:right;top:316px;font-size:10.6px;letter-spacing:0.35px;color:#000;">885.98</div>
<div class="t" style="left:518px;top:316px;font-size:10.6px;color:#000;">$</div>
<div class="t" style="left:511px;width:64px;text-align:right;top:316px;font-size:10.6px;letter-spacing:0.35px;color:#000;">1,754.53</div>
<div class="t" style="left:588px;top:316px;font-size:10.6px;color:#000;">$</div>
<div class="t" style="left:581px;width:64px;text-align:right;top:316px;font-size:10.6px;letter-spacing:0.35px;color:#000;">1,679.70</div>
<div class="t" style="left:658px;top:316px;font-size:10.6px;color:#000;">$</div>
<div class="t" style="left:651px;width:64px;text-align:right;top:316px;font-size:10.6px;letter-spacing:0.35px;color:#000;">1,787.82</div>
<div class="t" style="left:728px;top:316px;font-size:10.6px;color:#000;">$</div>
<div class="t" style="left:721px;width:64px;text-align:right;top:316px;font-size:10.6px;letter-spacing:0.35px;color:#000;">1,626.62</div>
<div class="t" style="left:798px;top:316px;font-size:10.6px;color:#000;">$</div>
<div class="t" style="left:791px;width:64px;text-align:right;top:316px;font-size:10.6px;letter-spacing:0.35px;color:#000;">1,419.67</div>
<div class="t" style="left:868px;top:316px;font-size:10.6px;color:#000;">$</div>
<div class="t" style="left:861px;width:64px;text-align:right;top:316px;font-size:10.6px;letter-spacing:0.35px;color:#000;">1,042.16</div>
<div class="t" style="left:938px;top:316px;font-size:10.6px;color:#000;font-weight:bold;">$</div>
<div class="t" style="left:931px;width:70px;text-align:right;top:316px;font-size:10.6px;letter-spacing:0.35px;color:#000;font-weight:bold;">18,176.13</div>
<div class="t" style="left:30px;top:331px;font-size:10.6px;color:#000;">Guava</div>
<div class="t" style="left:98px;top:331px;font-size:10.6px;color:#000;">$</div>
<div class="t" style="left:91px;width:64px;text-align:right;top:331px;font-size:10.6px;letter-spacing:0.35px;color:#000;">1,404.25</div>
<div class="t" style="left:168px;top:331px;font-size:10.6px;color:#000;">$</div>
<div class="t" style="left:161px;width:64px;text-align:right;top:331px;font-size:10.6px;letter-spacing:0.35px;color:#000;">1,470.95</div>
<div class="t" style="left:238px;top:331px;font-size:10.6px;color:#000;">$</div>
<div class="t" style="left:231px;width:64px;text-align:right;top:331px;font-size:10.6px;letter-spacing:0.35px;color:#000;">1,678.71</div>
<div class="t" style="left:308px;top:331px;font-size:10.6px;color:#000;">$</div>
<div class="t" style="left:301px;width:64px;text-align:right;top:331px;font-size:10.6px;letter-spacing:0.35px;color:#000;">973.12</div>
<div class="t" style="left:378px;top:331px;font-size:10.6px;color:#000;">$</div>
<div class="t" style="left:371px;width:64px;text-align:right;top:331px;font-size:10.6px;letter-spacing:0.35px;color:#000;">933.59</div>
<div class="t" style="left:448px;top:331px;font-size:10.6px;color:#000;">$</div>
<div class="t" style="left:441px;width:64px;text-align:right;top:331px;font-size:10.6px;letter-spacing:0.35px;color:#000;">1,095.29</div>
<div class="t" style="left:518px;top:331px;font-size:10.6px;color:#000;">$</div>
<div class="t" style="left:511px;width:64px;text-align:right;top:331px;font-size:10.6px;letter-spacing:0.35px;color:#000;">2,527.37</div>
<div class="t" style="left:588px;top:331px;font-size:10.6px;color:#000;">$</div>
<div class="t" style="left:581px;width:64px;text-align:right;top:331px;font-size:10.6px;letter-spacing:0.35px;color:#000;">2,077.96</div>
<div class="t" style="left:658px;top:331px;font-size:10.6px;color:#000;">$</div>
<div class="t" style="left:651px;width:64px;text-align:right;top:331px;font-size:10.6px;letter-spacing:0.35px;color:#000;">498.04</div>
<div class="t" style="left:728px;top:331px;font-size:10.6px;color:#000;">$</div>
<div class="t" style="left:721px;width:64px;text-align:right;top:331px;font-size:10.6px;letter-spacing:0.35px;color:#000;">1,483.07</div>
<div class="t" style="left:798px;top:331px;font-size:10.6px;color:#000;">$</div>
<div class="t" style="left:791px;width:64px;text-align:right;top:331px;font-size:10.6px;letter-spacing:0.35px;color:#000;">2,462.21</div>
<div class="t" style="left:868px;top:331px;font-size:10.6px;color:#000;">$</div>
<div class="t" style="left:861px;width:64px;text-align:right;top:331px;font-size:10.6px;letter-spacing:0.35px;color:#000;">1,240.94</div>
<div class="t" style="left:938px;top:331px;font-size:10.6px;color:#000;font-weight:bold;">$</div>
<div class="t" style="left:931px;width:70px;text-align:right;top:331px;font-size:10.6px;letter-spacing:0.35px;color:#000;font-weight:bold;">17,845.50</div>
<div class="t" style="left:30px;top:361px;font-size:10.6px;color:#000;font-weight:bold;">Total</div>
<div class="t" style="left:91px;width:64px;text-align:right;top:361px;font-size:10.6px;letter-spacing:0.3px;color:#000;font-weight:bold">$<span style="margin-left:1.5px">16,153.36</span></div>
<div class="t" style="left:161px;width:64px;text-align:right;top:361px;font-size:10.6px;letter-spacing:0.3px;color:#000;font-weight:bold">$<span style="margin-left:1.5px">16,309.21</span></div>
<div class="t" style="left:231px;width:64px;text-align:right;top:361px;font-size:10.6px;letter-spacing:0.3px;color:#000;font-weight:bold">$<span style="margin-left:1.5px">14,641.93</span></div>
<div class="t" style="left:301px;width:64px;text-align:right;top:361px;font-size:10.6px;letter-spacing:0.3px;color:#000;font-weight:bold">$<span style="margin-left:1.5px">13,174.41</span></div>
<div class="t" style="left:371px;width:64px;text-align:right;top:361px;font-size:10.6px;letter-spacing:0.3px;color:#000;font-weight:bold">$<span style="margin-left:1.5px">13,299.32</span></div>
<div class="t" style="left:441px;width:64px;text-align:right;top:361px;font-size:10.6px;letter-spacing:0.3px;color:#000;font-weight:bold">$<span style="margin-left:1.5px">14,502.17</span></div>
<div class="t" style="left:511px;width:64px;text-align:right;top:361px;font-size:10.6px;letter-spacing:0.3px;color:#000;font-weight:bold">$<span style="margin-left:1.5px">18,400.11</span></div>
<div class="t" style="left:581px;width:64px;text-align:right;top:361px;font-size:10.6px;letter-spacing:0.3px;color:#000;font-weight:bold">$<span style="margin-left:1.5px">16,199.05</span></div>
<div class="t" style="left:651px;width:64px;text-align:right;top:361px;font-size:10.6px;letter-spacing:0.3px;color:#000;font-weight:bold">$<span style="margin-left:1.5px">12,945.01</span></div>
<div class="t" style="left:721px;width:64px;text-align:right;top:361px;font-size:10.6px;letter-spacing:0.3px;color:#000;font-weight:bold">$<span style="margin-left:1.5px">15,445.70</span></div>
<div class="t" style="left:791px;width:64px;text-align:right;top:361px;font-size:10.6px;letter-spacing:0.3px;color:#000;font-weight:bold">$<span style="margin-left:1.5px">18,445.33</span></div>
<div class="t" style="left:861px;width:64px;text-align:right;top:361px;font-size:10.6px;letter-spacing:0.3px;color:#000;font-weight:bold">$<span style="margin-left:1.5px">11,637.14</span></div>
<div class="t" style="left:931px;width:70px;text-align:right;top:361px;font-size:10.6px;letter-spacing:0.3px;color:#000;font-weight:bold">$<span style="margin-left:1.5px">181,152.74</span></div>
<div class="a" style="left:861px;top:433px;width:71px;height:16px;border:2px solid #0b4fc6"></div>
<div class="a" style="left:928px;top:445px;width:6px;height:6px;background:linear-gradient(#a9cdf6,#2a6ad4);border:1px solid #0b4fc6"></div>
<div class="a" style="left:56px;top:392px;width:673px;height:249px;background:#fff;border:2px solid #c6c6c6"></div>
<svg class="a" style="left:0;top:0" width="1030" height="772"><defs><linearGradient id="bf" x1="0" y1="0" x2="0" y2="1"><stop offset="0" stop-color="#b0d4fa"/><stop offset="1" stop-color="#4a8ed3"/></linearGradient><linearGradient id="bs" x1="0" y1="0" x2="0" y2="1"><stop offset="0" stop-color="#7596b9"/><stop offset="1" stop-color="#3a6b9c"/></linearGradient><linearGradient id="fl" x1="0" y1="0" x2="1" y2="0"><stop offset="0" stop-color="#d0d0d0"/><stop offset="1" stop-color="#e4e4e4"/></linearGradient></defs><linearGradient id="flr" gradientUnits="userSpaceOnUse" x1="177" y1="578" x2="191.6" y2="597.4" spreadMethod="repeat"><stop offset="0" stop-color="#bdbdbd"/><stop offset="0.27" stop-color="#fcfcfc"/><stop offset="0.55" stop-color="#c9c9c9"/><stop offset="1" stop-color="#bdbdbd"/></linearGradient><polygon points="139.5,583.5 625.5,583.5 639.5,573.0 153.5,573.0" fill="url(#flr)"/><polygon points="139.5,583.5 625.5,583.5 625.5,585.0 139.5,585.0" fill="#c8c8c8"/><polyline points="153.5,573.0 639.5,573.0 625.5,583.5" fill="none" stroke="#b0b0b0" stroke-width="1"/><polyline points="139.5,583.50 153.5,573.60" fill="none" stroke="#a0a0a0" stroke-width="1"/><line x1="136.5" y1="583.50" x2="139.5" y2="583.50" stroke="#a0a0a0" stroke-width="1"/><polyline points="139.5,557.16 153.5,547.06 639.5,547.06" fill="none" stroke="#8c8c8c" stroke-width="1"/><line x1="136.5" y1="557.16" x2="139.5" y2="557.16" stroke="#a0a0a0" stroke-width="1"/><polyline points="139.5,530.82 153.5,520.52 639.5,520.52" fill="none" stroke="#8c8c8c" stroke-width="1"/><line x1="136.5" y1="530.82" x2="139.5" y2="530.82" stroke="#a0a0a0" stroke-width="1"/><polyline points="139.5,504.48 153.5,493.98 639.5,493.98" fill="none" stroke="#8c8c8c" stroke-width="1"/><line x1="136.5" y1="504.48" x2="139.5" y2="504.48" stroke="#a0a0a0" stroke-width="1"/><polyline points="139.5,478.14 153.5,467.44 639.5,467.44" fill="none" stroke="#8c8c8c" stroke-width="1"/><line x1="136.5" y1="478.14" x2="139.5" y2="478.14" stroke="#a0a0a0" stroke-width="1"/><polyline points="139.5,451.80 153.5,440.90 639.5,440.90" fill="none" stroke="#b4b4b4" stroke-width="1"/><line x1="136.5" y1="451.80" x2="139.5" y2="451.80" stroke="#a0a0a0" stroke-width="1"/><line x1="139.5" y1="452.0" x2="139.5" y2="587.5" stroke="#a8a8a8" stroke-width="1"/><line x1="139.5" y1="584.5" x2="139.5" y2="587.5" stroke="#b0b0b0" stroke-width="1"/><line x1="179.5" y1="584.5" x2="179.5" y2="587.5" stroke="#b0b0b0" stroke-width="1"/><line x1="220.5" y1="584.5" x2="220.5" y2="587.5" stroke="#b0b0b0" stroke-width="1"/><line x1="260.5" y1="584.5" x2="260.5" y2="587.5" stroke="#b0b0b0" stroke-width="1"/><line x1="301.5" y1="584.5" x2="301.5" y2="587.5" stroke="#b0b0b0" stroke-width="1"/><line x1="341.5" y1="584.5" x2="341.5" y2="587.5" stroke="#b0b0b0" stroke-width="1"/><line x1="382.5" y1="584.5" x2="382.5" y2="587.5" stroke="#b0b0b0" stroke-width="1"/><line x1="422.5" y1="584.5" x2="422.5" y2="587.5" stroke="#b0b0b0" stroke-width="1"/><line x1="463.5" y1="584.5" x2="463.5" y2="587.5" stroke="#b0b0b0" stroke-width="1"/><line x1="503.5" y1="584.5" x2="503.5" y2="587.5" stroke="#b0b0b0" stroke-width="1"/><line x1="544.5" y1="584.5" x2="544.5" y2="587.5" stroke="#b0b0b0" stroke-width="1"/><line x1="584.5" y1="584.5" x2="584.5" y2="587.5" stroke="#b0b0b0" stroke-width="1"/><line x1="625.5" y1="584.5" x2="625.5" y2="587.5" stroke="#b0b0b0" stroke-width="1"/><rect x="155.0" y="495.40606" width="16.6" height="85.59393999999998" fill="url(#bf)"/><polygon points="171.6,495.40606 176.6,491.10606 176.6,576.7 171.6,581" fill="url(#bs)"/><polygon points="155.0,495.40606 160.0,491.10606 176.6,491.10606 171.6,495.40606" fill="#7d9dc3"/><rect x="195.5" y="476.92284" width="16.6" height="104.07715999999999" fill="url(#bf)"/><polygon points="212.1,476.92284 217.1,472.62284 217.1,576.7 212.1,581" fill="url(#bs)"/><polygon points="195.5,476.92284 200.5,472.62284 217.1,472.62284 212.1,476.92284" fill="#7d9dc3"/><rect x="236.0" y="478.34059" width="16.6" height="102.65940999999998" fill="url(#bf)"/><polygon points="252.6,478.34059 257.6,474.04059 257.6,576.7 252.6,581" fill="url(#bs)"/><polygon points="236.0,478.34059 241.0,474.04059 257.6,474.04059 252.6,478.34059" fill="#7d9dc3"/><rect x="276.5" y="509.63444" width="16.6" height="71.36556000000002" fill="url(#bf)"/><polygon points="293.1,509.63444 298.1,505.33444 298.1,576.7 293.1,581" fill="url(#bs)"/><polygon points="276.5,509.63444 281.5,505.33444 298.1,505.33444 293.1,509.63444" fill="#7d9dc3"/><rect x="317.0" y="526.74496" width="16.6" height="54.25504000000001" fill="url(#bf)"/><polygon points="333.6,526.74496 338.6,522.44496 338.6,576.7 333.6,581" fill="url(#bs)"/><polygon points="317.0,526.74496 322.0,522.44496 338.6,522.44496 333.6,526.74496" fill="#7d9dc3"/><rect x="357.5" y="481.49992" width="16.6" height="99.50008000000003" fill="url(#bf)"/><polygon points="374.1,481.49992 379.1,477.19991999999996 379.1,576.7 374.1,581" fill="url(#bs)"/><polygon points="357.5,481.49992 362.5,477.19991999999996 379.1,477.19991999999996 374.1,481.49992" fill="#7d9dc3"/><rect x="398.0" y="482.83022" width="16.6" height="98.16978" fill="url(#bf)"/><polygon points="414.6,482.83022 419.6,478.53022 419.6,576.7 414.6,581" fill="url(#bs)"/><polygon points="398.0,482.83022 403.0,478.53022 419.6,478.53022 414.6,482.83022" fill="#7d9dc3"/><rect x="438.5" y="472.19206" width="16.6" height="108.80793999999997" fill="url(#bf)"/><polygon points="455.1,472.19206 460.1,467.89206 460.1,576.7 455.1,581" fill="url(#bs)"/><polygon points="438.5,472.19206 443.5,467.89206 460.1,467.89206 455.1,472.19206" fill="#7d9dc3"/><rect x="479.0" y="494.19342" width="16.6" height="86.80658" fill="url(#bf)"/><polygon points="495.6,494.19342 500.6,489.89342 500.6,576.7 495.6,581" fill="url(#bs)"/><polygon points="479.0,494.19342 484.0,489.89342 500.6,489.89342 495.6,494.19342" fill="#7d9dc3"/><rect x="519.5" y="519.35676" width="16.6" height="61.64323999999999" fill="url(#bf)"/><polygon points="536.1,519.35676 541.1,515.05676 541.1,576.7 536.1,581" fill="url(#bs)"/><polygon points="519.5,519.35676 524.5,515.05676 541.1,515.05676 536.1,519.35676" fill="#7d9dc3"/><rect x="560.0" y="496.55669" width="16.6" height="84.44331" fill="url(#bf)"/><polygon points="576.6,496.55669 581.6,492.25669 581.6,576.7 576.6,581" fill="url(#bs)"/><polygon points="560.0,496.55669 565.0,492.25669 581.6,492.25669 576.6,496.55669" fill="#7d9dc3"/><rect x="600.5" y="527.73341" width="16.6" height="53.26658999999995" fill="url(#bf)"/><polygon points="617.1,527.73341 622.1,523.4334100000001 622.1,576.7 617.1,581" fill="url(#bs)"/><polygon points="600.5,527.73341 605.5,523.4334100000001 622.1,523.4334100000001 617.1,527.73341" fill="#7d9dc3"/><text x="122.5" y="588.0" text-anchor="end" font-family="Liberation Sans" font-size="9" fill="#000">$-</text><text x="127.5" y="561.7" text-anchor="end" font-family="Liberation Sans" font-size="9" fill="#000">$500.00</text><text x="127.5" y="535.4" text-anchor="end" font-family="Liberation Sans" font-size="9" fill="#000">$1,000.00</text><text x="127.5" y="509.1" text-anchor="end" font-family="Liberation Sans" font-size="9" fill="#000">$1,500.00</text><text x="127.5" y="482.8" text-anchor="end" font-family="Liberation Sans" font-size="9" fill="#000">$2,000.00</text><text x="127.5" y="456.5" text-anchor="end" font-family="Liberation Sans" font-size="9" fill="#000">$2,500.00</text><text x="161.5" y="598" text-anchor="end" font-family="Liberation Sans" font-size="9.3" fill="#1a1a2a" transform="rotate(-45 161.5 598)">January</text><text x="202.0" y="598" text-anchor="end" font-family="Liberation Sans" font-size="9.3" fill="#1a1a2a" transform="rotate(-45 202.0 598)">February</text><text x="242.5" y="598" text-anchor="end" font-family="Liberation Sans" font-size="9.3" fill="#1a1a2a" transform="rotate(-45 242.5 598)">March</text><text x="283.0" y="598" text-anchor="end" font-family="Liberation Sans" font-size="9.3" fill="#1a1a2a" transform="rotate(-45 283.0 598)">April</text><text x="323.5" y="598" text-anchor="end" font-family="Liberation Sans" font-size="9.3" fill="#1a1a2a" transform="rotate(-45 323.5 598)">May</text><text x="364.0" y="598" text-anchor="end" font-family="Liberation Sans" font-size="9.3" fill="#1a1a2a" transform="rotate(-45 364.0 598)">June</text><text x="404.5" y="598" text-anchor="end" font-family="Liberation Sans" font-size="9.3" fill="#1a1a2a" transform="rotate(-45 404.5 598)">July</text><text x="445.0" y="598" text-anchor="end" font-family="Liberation Sans" font-size="9.3" fill="#1a1a2a" transform="rotate(-45 445.0 598)">August</text><text x="485.5" y="598" text-anchor="end" font-family="Liberation Sans" font-size="9.3" fill="#1a1a2a" transform="rotate(-45 485.5 598)">September</text><text x="526.0" y="598" text-anchor="end" font-family="Liberation Sans" font-size="9.3" fill="#1a1a2a" transform="rotate(-45 526.0 598)">October</text><text x="566.5" y="598" text-anchor="end" font-family="Liberation Sans" font-size="9.3" fill="#1a1a2a" transform="rotate(-45 566.5 598)">November</text><text x="607.0" y="598" text-anchor="end" font-family="Liberation Sans" font-size="9.3" fill="#1a1a2a" transform="rotate(-45 607.0 598)">December</text><text x="366.8" y="420.6" font-family="Liberation Sans" font-weight="bold" font-size="17.5" textLength="50.5" lengthAdjust="spacingAndGlyphs" fill="#000">Apples</text><rect x="679" y="530" width="6" height="6" fill="url(#bf)"/><text x="687" y="536.5" font-family="Liberation Sans" font-size="9" fill="#000">Apples</text></svg>
<div class="a" style="left:0;top:733px;width:1030px;height:1px;background:#a0a0a0"></div><div class="a" style="left:64px;top:734px;width:966px;height:17px;background:#8c9cb0"></div><div class="a" style="left:671px;top:734px;width:4px;height:17px;background:linear-gradient(90deg,#d8d8d8,#f4f4f4)"></div><div class="a" style="left:675px;top:734px;width:355px;height:17px;background:#f7f7f7;border-bottom:1px solid #9a9a9a"></div><div class="a" style="left:678px;top:739px;width:332px;height:8px;border-radius:4px;background:#c2c2c2"></div><div class="a" style="left:64px;top:749px;width:966px;height:20px;background:linear-gradient(#f4f4f4,#e0e0e0);border-top:1px solid #6f6f6f;box-shadow:inset 0 1px 0 #a0a0a0, inset 0 2px 0 #fbfbfb"></div><div class="a" style="left:159px;top:752px;width:1px;height:17px;background:#a8a8a8"></div><div class="a" style="left:160px;top:752px;width:1px;height:17px;background:#fafafa"></div><div class="a" style="left:694px;top:752px;width:1px;height:17px;background:#a8a8a8"></div><div class="a" style="left:695px;top:752px;width:1px;height:17px;background:#fafafa"></div><div class="a" style="left:833px;top:752px;width:1px;height:17px;background:#a8a8a8"></div><div class="a" style="left:834px;top:752px;width:1px;height:17px;background:#fafafa"></div><div class="a" style="left:868px;top:752px;width:1px;height:17px;background:#a8a8a8"></div><div class="a" style="left:869px;top:752px;width:1px;height:17px;background:#fafafa"></div><div class="a" style="left:902px;top:752px;width:1px;height:17px;background:#a8a8a8"></div><div class="a" style="left:903px;top:752px;width:1px;height:17px;background:#fafafa"></div><div class="a" style="left:930px;top:752px;width:1px;height:17px;background:#a8a8a8"></div><div class="a" style="left:931px;top:752px;width:1px;height:17px;background:#fafafa"></div><div class="t" style="left:68px;top:755px;font-size:10.8px;color:#222">Normal View</div><div class="t" style="left:166px;top:755px;font-size:10.8px;color:#222">Ready</div><div class="t" style="left:698px;top:755px;font-size:10.5px;color:#111">Sum<span style="margin:0 1px;color:#555">=</span>0</div><svg class="a" style="left:818px;top:756px" width="12" height="8"><path d="M1,1.5 H10 L5.5,6.5 Z" fill="#111"/></svg><div class="a" style="left:0;top:734px;width:64px;height:35px;background:#ececec;border-right:1px solid #b8b8b8"></div><div class="a" style="left:2px;top:739px;width:58px;height:24px;border-radius:4px;background:linear-gradient(#f4f4f4,#dcdcdc);border:1px solid #9a9a9a"></div><div class="a" style="left:3px;top:740px;width:29px;height:22px;border-radius:3px 0 0 3px;background:linear-gradient(#6a6a6a,#777)"></div><div class="a" style="left:32px;top:740px;width:1px;height:22px;background:#9a9a9a"></div><svg class="a" style="left:0;top:734px" width="64" height="34"><rect x="9.5" y="10.5" width="16" height="12.5" rx="1" fill="#234a70" stroke="#8fd4ff" stroke-width="0.9"/><rect x="10.6" y="11.6" width="2.2" height="3" fill="#3fa6f2"/><rect x="10.6" y="15.399999999999999" width="2.2" height="3" fill="#3fa6f2"/><rect x="10.6" y="19.2" width="2.2" height="3" fill="#3fa6f2"/><rect x="13.6" y="11.6" width="2.2" height="3" fill="#3fa6f2"/><rect x="13.6" y="15.399999999999999" width="2.2" height="3" fill="#3fa6f2"/><rect x="13.6" y="19.2" width="2.2" height="3" fill="#3fa6f2"/><rect x="16.6" y="11.6" width="2.2" height="3" fill="#3fa6f2"/><rect x="16.6" y="15.399999999999999" width="2.2" height="3" fill="#3fa6f2"/><rect x="16.6" y="19.2" width="2.2" height="3" fill="#3fa6f2"/><rect x="19.6" y="11.6" width="2.2" height="3" fill="#3fa6f2"/><rect x="19.6" y="15.399999999999999" width="2.2" height="3" fill="#3fa6f2"/><rect x="19.6" y="19.2" width="2.2" height="3" fill="#3fa6f2"/><rect x="22.6" y="11.6" width="2.2" height="3" fill="#3fa6f2"/><rect x="22.6" y="15.399999999999999" width="2.2" height="3" fill="#3fa6f2"/><rect x="22.6" y="19.2" width="2.2" height="3" fill="#3fa6f2"/><rect x="36.5" y="11.5" width="8" height="11" fill="#333"/><rect x="37.7" y="12.7" width="2.4" height="2.3" fill="#f4f4f4"/><rect x="37.7" y="16.099999999999998" width="2.4" height="2.3" fill="#f4f4f4"/><rect x="37.7" y="19.5" width="2.4" height="2.3" fill="#f4f4f4"/><rect x="41.2" y="12.7" width="2.4" height="2.3" fill="#f4f4f4"/><rect x="41.2" y="16.099999999999998" width="2.4" height="2.3" fill="#f4f4f4"/><rect x="41.2" y="19.5" width="2.4" height="2.3" fill="#f4f4f4"/><rect x="47.5" y="11.5" width="8" height="11" fill="#333"/><rect x="48.7" y="12.7" width="2.4" height="2.3" fill="#f4f4f4"/><rect x="48.7" y="16.099999999999998" width="2.4" height="2.3" fill="#f4f4f4"/><rect x="48.7" y="19.5" width="2.4" height="2.3" fill="#f4f4f4"/><rect x="52.2" y="12.7" width="2.4" height="2.3" fill="#f4f4f4"/><rect x="52.2" y="16.099999999999998" width="2.4" height="2.3" fill="#f4f4f4"/><rect x="52.2" y="19.5" width="2.4" height="2.3" fill="#f4f4f4"/></svg><div class="a" style="left:65px;top:735px;width:66px;height:15px;background:linear-gradient(#f6f6f6,#e2e2e2);border-bottom:1px solid #c8c8c8"></div><svg class="a" style="left:65px;top:735px" width="66" height="15"><path d="M8.5,3 V11 M15,3.5 L9.5,7 L15,10.5 Z" fill="#9a9a9a" stroke="#9a9a9a" stroke-width="0.8"/><path d="M28,3.5 L22.5,7 L28,10.5 Z" fill="#9a9a9a"/><path d="M38.5,3.5 L44,7 L38.5,10.5 Z" fill="#9a9a9a"/><path d="M52,3.5 L57.5,7 L52,10.5 Z M58.5,3 V11" fill="#9a9a9a" stroke="#9a9a9a" stroke-width="0.8"/></svg><svg class="a" style="left:130px;top:733px" width="300" height="19"><defs><linearGradient id="tab" x1="0" y1="0" x2="0" y2="1"><stop offset="0" stop-color="#e4e4e4"/><stop offset="1" stop-color="#cfcfcf"/></linearGradient></defs><path d="M267,1.5 H285 Q290,1.5 291,3 L286,15.5 Q285,17.5 282,17.5 H271 Q268.5,17.5 267,15.5 Z" fill="url(#tab)" stroke="#8a8a8a" stroke-width="0.8"/><text x="277.5" y="14" text-anchor="middle" font-family="Liberation Sans" font-weight="bold" font-size="13" fill="#555">+</text><path d="M209,1.5 H264 Q269,1.5 270,3 L265,15.5 Q264,17.5 261,17.5 H213 Q210.5,17.5 209,15.5 Z" fill="url(#tab)" stroke="#8a8a8a" stroke-width="0.8"/><text x="238.0" y="13.3" text-anchor="middle" font-family="Liberation Sans" font-size="10.8" fill="#1a1a1a">FY 2015</text><path d="M152,1.5 H206 Q211,1.5 212,3 L207,15.5 Q206,17.5 203,17.5 H156 Q153.5,17.5 152,15.5 Z" fill="url(#tab)" stroke="#8a8a8a" stroke-width="0.8"/><text x="180.5" y="13.3" text-anchor="middle" font-family="Liberation Sans" font-size="10.8" fill="#1a1a1a">FY 2016</text><path d="M95,1.5 H149 Q154,1.5 155,3 L150,15.5 Q149,17.5 146,17.5 H99 Q96.5,17.5 95,15.5 Z" fill="url(#tab)" stroke="#8a8a8a" stroke-width="0.8"/><text x="123.5" y="13.3" text-anchor="middle" font-family="Liberation Sans" font-size="10.8" fill="#1a1a1a">FY 2017</text><path d="M14,1 H93 Q98,1 98,3 L93,15.5 Q92,17.5 89,17.5 H17 Q14.5,17.5 14,15.5 Z" fill="#fbfbfb" stroke="#8a8a8a" stroke-width="0.8"/><text x="55" y="13.3" text-anchor="middle" font-family="Liberation Sans" font-weight="bold" font-size="10.8" fill="#111">YoY Analysis</text></svg><div class="a" style="left:0;top:769px;width:1030px;height:3px;background:#0c0c0c"></div>
</body></html>
